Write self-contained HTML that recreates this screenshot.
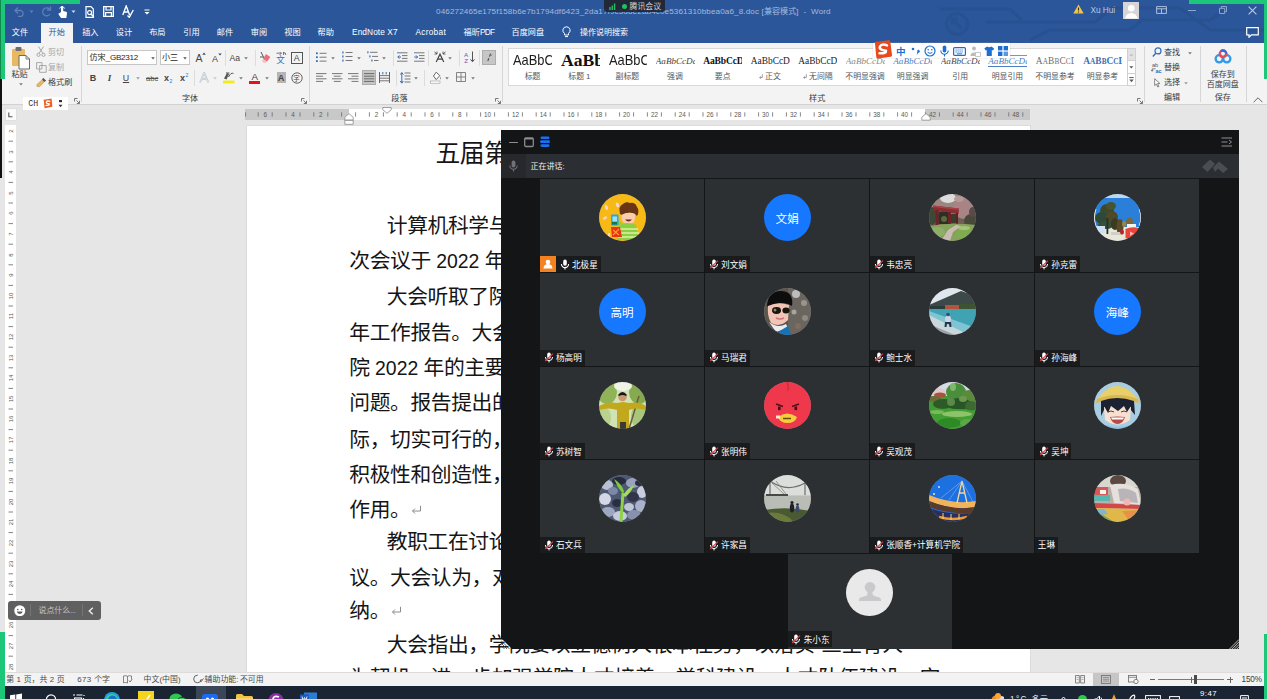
<!DOCTYPE html><html><head><meta charset="utf-8"><title>Word</title><style>html,body{margin:0;padding:0}body{width:1267px;height:699px;overflow:hidden;position:relative;background:#e6e6e6;font-family:"Liberation Sans",sans-serif}svg{display:inline-block}.c{font-family:"Liberation Sans","Noto Sans CJK SC",sans-serif}.d{font-family:"Liberation Sans","Noto Sans CJK SC",sans-serif;font-size:20.8px;letter-spacing:-0.42px}</style></head><body><div style="position:absolute;left:0px;top:0px;width:1267px;height:43px;background:#2b579a;"></div><div style="position:absolute;left:0px;top:43px;width:1267px;height:62px;background:#f3f3f3;border-bottom:1px solid #d2d2d2;box-sizing:content-box;height:61px;"></div><svg style="position:absolute;left:880px;top:0px;" width="387" height="43" viewBox="0 0 387 43"><g fill="none" stroke="#274f8e" stroke-width="3.2" opacity="0.75"><circle cx="77" cy="24" r="10.5"/><path d="M82 29 L72 19 M78 19 H72 V25"/><path d="M60 9 H130 L142 20"/><path d="M106 22 H215 L232 8 H300 L330 30 H387"/><path d="M150 40 L170 30 H250 L262 20 H330 L345 10"/></g></svg><svg style="position:absolute;left:14px;top:6px;" width="12" height="11" viewBox="0 0 12 11"><path d="M1.5 4.5 H7 A3.2 3.2 0 0 1 7 10.5 H4" fill="none" stroke="#5f80b8" stroke-width="1.3"/><path d="M4 1.5 L1 4.5 L4 7.5" fill="none" stroke="#5f80b8" stroke-width="1.3"/></svg><svg style="position:absolute;left:29px;top:10px;" width="5" height="4" viewBox="0 0 5 4"><path d="M0.5 0.5 L2.5 3 L4.5 0.5" fill="#5f80b8"/></svg><svg style="position:absolute;left:40px;top:6px;" width="12" height="11" viewBox="0 0 12 11"><path d="M9.5 3 A4 4 0 1 0 10 8" fill="none" stroke="#5f80b8" stroke-width="1.3"/><path d="M10.5 0.5 V4 H7" fill="none" stroke="#5f80b8" stroke-width="1.3"/></svg><svg style="position:absolute;left:57px;top:5px;" width="11" height="14" viewBox="0 0 11 14"><path d="M4 7 V2.2 a1.1 1.1 0 0 1 2.2 0 V6 l3 .8 q1 .4 .8 1.6 L9.3 13 H4 L1.5 9.2 q-.3-1 .8-1 z" fill="#fff"/><path d="M2.6 3.6 a2.6 2.6 0 0 1 5 0" fill="none" stroke="#fff" stroke-width="0.9"/></svg><svg style="position:absolute;left:71px;top:10px;" width="5" height="4" viewBox="0 0 5 4"><path d="M0.5 0.5 L2.5 3 L4.5 0.5" fill="#cfd9ec"/></svg><svg style="position:absolute;left:85px;top:6px;" width="10" height="12" viewBox="0 0 10 12"><path d="M1 0.7 H6 L8.3 3 V11.3 H1 z" fill="none" stroke="#fff" stroke-width="1.2"/><circle cx="4.6" cy="6.6" r="2" fill="none" stroke="#fff" stroke-width="1.1"/><path d="M6 8 L8.8 11" stroke="#fff" stroke-width="1.3"/></svg><svg style="position:absolute;left:103px;top:6px;" width="11" height="11" viewBox="0 0 11 11"><path d="M0.7 0.7 H10.3 V10.3 H0.7 z" fill="none" stroke="#fff" stroke-width="1.3"/><path d="M3 0.7 V4 H8 V0.7 M2.6 10.3 V6.6 H8.4 V10.3" fill="none" stroke="#fff" stroke-width="1.2"/></svg><svg style="position:absolute;left:122px;top:5px;" width="12" height="13" viewBox="0 0 12 13"><path d="M0.8 10 L4.2 1 L7.6 10 M2 7 H6.4" fill="none" stroke="#fff" stroke-width="1.4"/><path d="M5.5 10.5 L7.3 12.3 L11.3 5" fill="none" stroke="#fff" stroke-width="1.4"/></svg><svg style="position:absolute;left:144px;top:9px;" width="6" height="6" viewBox="0 0 6 6"><path d="M0.5 1 H5.5" stroke="#fff" stroke-width="1"/><path d="M0.5 3 L3 5.5 L5.5 3 z" fill="#fff"/></svg><div style="position:absolute;left:436.00px;top:6.85px;height:9.72px;line-height:9.72px;font-size:8.1px;color:#a6b9dc;white-space:nowrap;font-family:'Liberation Sans',sans-serif"><span style="font-family:'Liberation Sans';font-size:8.1px;letter-spacing:0.13109412202381px;">046272465e175f158b6e7b1794df6423_2da17f9c5d8e2ab4c0e5361310bbea0a6_8.doc&nbsp;[</span><span class="c" style="font-size:8.1px;">兼容模式</span><span style="font-family:'Liberation Sans';font-size:8.1px;letter-spacing:0.13109412202381px;">]&nbsp;&nbsp;-&nbsp;&nbsp;Word</span></div><div style="position:absolute;left:603.5px;top:0px;width:61.5px;height:12.2px;background:rgba(32,36,44,0.9);border-radius:0 0 3px 3px;"></div><svg style="position:absolute;left:609px;top:1.5px;" width="9" height="8" viewBox="0 0 9 8"><path d="M1 8 V5 M3.3 8 V3.5 M5.6 8 V1.5" stroke="#21c064" stroke-width="1.4"/></svg><div style="position:absolute;left:621.5px;top:4px;width:5px;height:5px;background:#21c064;border-radius:50%;"></div><div style="position:absolute;left:629.50px;top:2.36px;height:9.48px;line-height:9.48px;font-size:7.9px;color:#d4d4d4;white-space:nowrap;font-family:'Liberation Sans',sans-serif"><span class="c" style="font-size:7.9px;">腾讯会议</span></div><svg style="position:absolute;left:1073px;top:4px;" width="11" height="10" viewBox="0 0 11 10"><path d="M5.5 0.5 L10.7 9.5 H0.3 z" fill="#f6c343"/><path d="M5.5 3.4 V6.6 M5.5 7.5 V8.6" stroke="#2b2b2b" stroke-width="1.1"/></svg><div style="position:absolute;left:1090.50px;top:6.05px;height:9.96px;line-height:9.96px;font-size:8.3px;color:#b9c8e4;white-space:nowrap;font-family:'Liberation Sans',sans-serif"><span style="font-family:'Liberation Sans';font-size:8.3px;letter-spacing:-0.06861197916666721px;">Xu&nbsp;Hui</span></div><div style="position:absolute;left:1122.5px;top:2px;width:16.5px;height:16.5px;background:#d6d6d6;"></div><svg style="position:absolute;left:1122.5px;top:2px;" width="16.5" height="16.5" viewBox="0 0 16.5 16.5"><circle cx="8.25" cy="6.3" r="3.3" fill="#fff"/><path d="M2 16.5 a6.3 6.3 0 0 1 12.5 0 z" fill="#fff"/></svg><svg style="position:absolute;left:1156px;top:6px;" width="11" height="8" viewBox="0 0 11 8"><path d="M0.6 0.6 H10.4 V7.4 H0.6 z M0.6 2.8 H10.4 M5.5 2.8 V7.4" fill="none" stroke="#aebfdd" stroke-width="1"/></svg><div style="position:absolute;left:1188px;top:10px;width:8px;height:1px;background:#8da6d0;"></div><svg style="position:absolute;left:1218.5px;top:5.5px;" width="8" height="8" viewBox="0 0 8 8"><path d="M0.5 2.3 H5.7 V7.5 H0.5 z M2.3 2.3 V0.5 H7.5 V5.7 H5.7" fill="none" stroke="#8da6d0" stroke-width="1"/></svg><svg style="position:absolute;left:1248px;top:5.5px;" width="9" height="9" viewBox="0 0 9 9"><path d="M0.6 0.6 L8.4 8.4 M8.4 0.6 L0.6 8.4" stroke="#b9c8e4" stroke-width="1.1"/></svg><svg style="position:absolute;left:1246px;top:27px;" width="13" height="11" viewBox="0 0 13 11"><path d="M0.7 0.7 H12.3 V7.8 H5.5 L3 10.2 V7.8 H0.7 z" fill="none" stroke="#fff" stroke-width="1.2"/></svg><div style="position:absolute;left:41px;top:23px;width:32px;height:20.5px;background:#f3f3f3;"></div><div style="position:absolute;left:11.70px;top:27.90px;height:9.84px;line-height:9.84px;font-size:8.2px;color:#ffffff;white-space:nowrap;font-family:'Liberation Sans',sans-serif"><span class="c" style="font-size:8.2px;">文件</span></div><div style="position:absolute;left:82.15px;top:27.90px;height:9.84px;line-height:9.84px;font-size:8.2px;color:#ffffff;white-space:nowrap;font-family:'Liberation Sans',sans-serif"><span class="c" style="font-size:8.2px;">插入</span></div><div style="position:absolute;left:115.80px;top:27.90px;height:9.84px;line-height:9.84px;font-size:8.2px;color:#ffffff;white-space:nowrap;font-family:'Liberation Sans',sans-serif"><span class="c" style="font-size:8.2px;">设计</span></div><div style="position:absolute;left:149.15px;top:27.90px;height:9.84px;line-height:9.84px;font-size:8.2px;color:#ffffff;white-space:nowrap;font-family:'Liberation Sans',sans-serif"><span class="c" style="font-size:8.2px;">布局</span></div><div style="position:absolute;left:183.20px;top:27.90px;height:9.84px;line-height:9.84px;font-size:8.2px;color:#ffffff;white-space:nowrap;font-family:'Liberation Sans',sans-serif"><span class="c" style="font-size:8.2px;">引用</span></div><div style="position:absolute;left:216.80px;top:27.90px;height:9.84px;line-height:9.84px;font-size:8.2px;color:#ffffff;white-space:nowrap;font-family:'Liberation Sans',sans-serif"><span class="c" style="font-size:8.2px;">邮件</span></div><div style="position:absolute;left:250.80px;top:27.90px;height:9.84px;line-height:9.84px;font-size:8.2px;color:#ffffff;white-space:nowrap;font-family:'Liberation Sans',sans-serif"><span class="c" style="font-size:8.2px;">审阅</span></div><div style="position:absolute;left:284.30px;top:27.90px;height:9.84px;line-height:9.84px;font-size:8.2px;color:#ffffff;white-space:nowrap;font-family:'Liberation Sans',sans-serif"><span class="c" style="font-size:8.2px;">视图</span></div><div style="position:absolute;left:317.55px;top:27.90px;height:9.84px;line-height:9.84px;font-size:8.2px;color:#ffffff;white-space:nowrap;font-family:'Liberation Sans',sans-serif"><span class="c" style="font-size:8.2px;">帮助</span></div><div style="position:absolute;left:48.50px;top:27.90px;height:9.84px;line-height:9.84px;font-size:8.2px;color:#2b579a;white-space:nowrap;font-family:'Liberation Sans',sans-serif"><span class="c" style="font-size:8.2px;">开始</span></div><div style="position:absolute;left:352.00px;top:27.85px;height:9.96px;line-height:9.96px;font-size:8.3px;color:#ffffff;white-space:nowrap;font-family:'Liberation Sans',sans-serif"><span style="font-family:'Liberation Sans';font-size:8.3px;letter-spacing:0.09435468749999956px;">EndNote&nbsp;X7</span></div><div style="position:absolute;left:415.40px;top:27.85px;height:9.96px;line-height:9.96px;font-size:8.3px;color:#ffffff;white-space:nowrap;font-family:'Liberation Sans',sans-serif"><span style="font-family:'Liberation Sans';font-size:8.3px;letter-spacing:0.2853459821428567px;">Acrobat</span></div><div style="position:absolute;left:463.50px;top:27.90px;height:9.84px;line-height:9.84px;font-size:8.2px;color:#ffffff;white-space:nowrap;font-family:'Liberation Sans',sans-serif"><span class="c" style="font-size:8.2px;">福昕</span><span style="font-family:'Liberation Sans';font-size:8.2px;letter-spacing:-0.6666666666666655px;">PDF</span></div><div style="position:absolute;left:511.60px;top:27.95px;height:9.72px;line-height:9.72px;font-size:8.1px;color:#ffffff;white-space:nowrap;font-family:'Liberation Sans',sans-serif"><span class="c" style="font-size:8.1px;">百度网盘</span></div><svg style="position:absolute;left:562px;top:26px;" width="9" height="12" viewBox="0 0 9 12"><path d="M4.5 0.8 a3.6 3.6 0 0 1 2 6.6 V9 H2.5 V7.4 A3.6 3.6 0 0 1 4.5 0.8 z M3 10.6 H6" fill="none" stroke="#fff" stroke-width="1"/></svg><div style="position:absolute;left:580.00px;top:28.01px;height:9.60px;line-height:9.60px;font-size:8.0px;color:#ffffff;white-space:nowrap;font-family:'Liberation Sans',sans-serif"><span class="c" style="font-size:8.0px;">操作说明搜索</span></div><div style="position:absolute;left:0px;top:0px;width:80px;height:4px;background:#1dc77a;"></div><div style="position:absolute;left:0px;top:0px;width:4.5px;height:79px;background:#1dc77a;"></div><div style="position:absolute;left:0px;top:0px;width:1px;height:79px;background:#0f8a4c;"></div><div style="position:absolute;left:0px;top:79px;width:1.7px;height:99px;background:#111;"></div><div style="position:absolute;left:0px;top:632px;width:4.5px;height:67px;background:#1dc77a;"></div><div style="position:absolute;left:1189px;top:0px;width:78px;height:3.5px;background:#1dc77a;"></div><div style="position:absolute;left:1263.5px;top:0px;width:3.5px;height:79px;background:#1dc77a;"></div><div style="position:absolute;left:1263.5px;top:634px;width:3.5px;height:65px;background:#1dc77a;"></div><svg style="position:absolute;left:11px;top:46px;" width="20" height="24" viewBox="0 0 20 24"><rect x="1" y="3" width="13" height="17" rx="1" fill="#e9b863"/><rect x="4.5" y="1" width="6" height="4" rx="1" fill="#6d6d6d"/><path d="M8 9.5 H15 L18.5 13 V23 H8 z" fill="#fff" stroke="#6b6b6b" stroke-width="1"/><path d="M15 9.5 V13 H18.5" fill="none" stroke="#6b6b6b" stroke-width="0.9"/></svg><div style="position:absolute;left:11.40px;top:70.45px;height:9.72px;line-height:9.72px;font-size:8.1px;color:#3b3b3b;white-space:nowrap;font-family:'Liberation Sans',sans-serif"><span class="c" style="font-size:8.1px;">粘贴</span></div><svg style="position:absolute;left:18.5px;top:83.3px;" width="4" height="3" viewBox="0 0 4 3"><path d="M0.2 0.3 L2 2.5 L3.8 0.3 z" fill="#777"/></svg><svg style="position:absolute;left:36px;top:46px;" width="10" height="11" viewBox="0 0 10 11"><path d="M2.5 0.5 L7 7.5 M7.5 0.5 L3 7.5" stroke="#a8a8a8" stroke-width="1"/><circle cx="2.5" cy="8.8" r="1.6" fill="none" stroke="#a8a8a8" stroke-width="1"/><circle cx="7.5" cy="8.8" r="1.6" fill="none" stroke="#a8a8a8" stroke-width="1"/></svg><div style="position:absolute;left:48.00px;top:48.05px;height:9.72px;line-height:9.72px;font-size:8.1px;color:#a8a8a8;white-space:nowrap;font-family:'Liberation Sans',sans-serif"><span class="c" style="font-size:8.1px;">剪切</span></div><svg style="position:absolute;left:36px;top:62px;" width="11" height="11" viewBox="0 0 11 11"><path d="M0.6 0.6 H6 V7 H0.6 z M3.6 3.5 H10.2 V10.3 H3.6 z" fill="#f3f3f3" stroke="#a8a8a8" stroke-width="1"/></svg><div style="position:absolute;left:48.00px;top:62.95px;height:9.72px;line-height:9.72px;font-size:8.1px;color:#a8a8a8;white-space:nowrap;font-family:'Liberation Sans',sans-serif"><span class="c" style="font-size:8.1px;">复制</span></div><svg style="position:absolute;left:36px;top:77px;" width="11" height="11" viewBox="0 0 11 11"><path d="M7.2 0.8 L10.2 3.8 L8.2 5 L6 2.8 z" fill="#555"/><path d="M5.8 3 L8 5.2 L3.5 9.8 L0.8 9.3 L1 7.5 z" fill="#e8b661" stroke="#b98a3c" stroke-width="0.5"/></svg><div style="position:absolute;left:48.00px;top:78.45px;height:9.72px;line-height:9.72px;font-size:8.1px;color:#3b3b3b;white-space:nowrap;font-family:'Liberation Sans',sans-serif"><span class="c" style="font-size:8.1px;">格式刷</span></div><svg style="position:absolute;left:74px;top:98px;" width="6" height="6" viewBox="0 0 6 6"><path d="M0.5 3.5 V0.5 H3.5 M2.5 2.5 L5.3 5.3 M5.5 2.8 V5.5 H2.8" fill="none" stroke="#6a6a6a" stroke-width="0.9"/></svg><div style="position:absolute;left:81px;top:46px;width:1px;height:56px;background:#d6d6d6;"></div><div style="position:absolute;left:87px;top:50.3px;width:70px;height:14.6px;background:#fff;border:1px solid #c6c6c6;box-sizing:border-box;"></div><div style="position:absolute;left:89.50px;top:53.25px;height:9.72px;line-height:9.72px;font-size:8.1px;color:#262626;white-space:nowrap;font-family:'Liberation Sans',sans-serif"><span class="c" style="font-size:8.1px;">仿宋</span><span style="font-family:'Liberation Sans';font-size:8.1px;letter-spacing:-0.2750044642857148px;">_GB2312</span></div><svg style="position:absolute;left:150.5px;top:56.8px;" width="4" height="3" viewBox="0 0 4 3"><path d="M0.2 0.3 L2 2.5 L3.8 0.3 z" fill="#555"/></svg><div style="position:absolute;left:159.5px;top:50.3px;width:30px;height:14.6px;background:#fff;border:1px solid #c6c6c6;box-sizing:border-box;"></div><div style="position:absolute;left:162.00px;top:53.25px;height:9.72px;line-height:9.72px;font-size:8.1px;color:#262626;white-space:nowrap;font-family:'Liberation Sans',sans-serif"><span class="c" style="font-size:8.1px;">小三</span></div><svg style="position:absolute;left:183px;top:56.8px;" width="4" height="3" viewBox="0 0 4 3"><path d="M0.2 0.3 L2 2.5 L3.8 0.3 z" fill="#555"/></svg><div style="position:absolute;left:195.50px;top:52.37px;height:12.60px;line-height:12.60px;font-size:10.5px;color:#444;white-space:nowrap;font-family:'Liberation Sans',sans-serif"><span style="font-family:'Liberation Sans';font-size:10.5px;letter-spacing:0.0px;">A</span></div><svg style="position:absolute;left:201.5px;top:51.5px;" width="4" height="3" viewBox="0 0 4 3"><path d="M0.3 2.7 L2 0.5 L3.7 2.7 z" fill="#444"/></svg><div style="position:absolute;left:212.00px;top:53.97px;height:10.80px;line-height:10.80px;font-size:9px;color:#444;white-space:nowrap;font-family:'Liberation Sans',sans-serif"><span style="font-family:'Liberation Sans';font-size:9px;letter-spacing:0.0px;">A</span></div><svg style="position:absolute;left:217.5px;top:52.5px;" width="4" height="3" viewBox="0 0 4 3"><path d="M0.3 0.4 L2 2.6 L3.7 0.4 z" fill="#444"/></svg><div style="position:absolute;left:224.5px;top:50px;width:1px;height:16px;background:#dcdcdc;"></div><div style="position:absolute;left:229.50px;top:52.99px;height:10.32px;line-height:10.32px;font-size:8.6px;color:#444;white-space:nowrap;font-family:'Liberation Sans',sans-serif"><span style="font-family:'Liberation Sans';font-size:8.6px;letter-spacing:0.0px;">Aa</span></div><svg style="position:absolute;left:243.5px;top:56.8px;" width="4" height="3" viewBox="0 0 4 3"><path d="M0.2 0.3 L2 2.5 L3.8 0.3 z" fill="#777"/></svg><div style="position:absolute;left:254.5px;top:50px;width:1px;height:16px;background:#dcdcdc;"></div><svg style="position:absolute;left:259px;top:51px;" width="12" height="12" viewBox="0 0 12 12"><path d="M2 1 L5.5 8 M1 6 H4" stroke="#555" stroke-width="1" fill="none"/><path d="M7 3 L11.3 6 L8 10.8 L4 8 z" fill="#e8707f"/><path d="M4 8 L8 10.8 L7 11.8 H4.5 L3 10 z" fill="#f5c0c6"/></svg><div style="position:absolute;left:276.30px;top:54.69px;height:10.32px;line-height:10.32px;font-size:8.6px;color:#2f6fba;white-space:nowrap;font-family:'Liberation Sans',sans-serif"><span class="c" style="font-size:8.6px;">文</span></div><svg style="position:absolute;left:276px;top:50.5px;" width="11" height="4.5" viewBox="0 0 11 4.5"><path d="M0.5 2.2 H3 M4 1 V4 M4 2.2 H6 M7.5 1 V4 M7.5 1.8 Q9.8 1 9.8 4" stroke="#555" stroke-width="0.8" fill="none"/></svg><div style="position:absolute;left:291px;top:52px;width:11.5px;height:11.5px;border:1px solid #555;box-sizing:border-box;"></div><div style="position:absolute;left:293.87px;top:53.18px;height:10.56px;line-height:10.56px;font-size:8.8px;color:#444;white-space:nowrap;font-family:'Liberation Sans',sans-serif"><span style="font-family:'Liberation Sans';font-size:8.8px;letter-spacing:0.0px;">A</span></div><div style="position:absolute;left:89.75px;top:72.97px;height:10.80px;line-height:10.80px;font-size:9px;color:#444;white-space:nowrap;font-family:'Liberation Sans',sans-serif"><span style="font-family:'Liberation Sans';font-size:9px;letter-spacing:0.0px;font-weight:bold;">B</span></div><div style="position:absolute;left:107.75px;top:72.97px;height:10.80px;line-height:10.80px;font-size:9px;color:#444;white-space:nowrap;font-family:'Liberation Sans',sans-serif"><span style="font-family:'Liberation Serif';font-size:9px;letter-spacing:0.0px;font-style:italic;font-weight:bold;">I</span></div><div style="position:absolute;left:122.82px;top:72.78px;height:10.56px;line-height:10.56px;font-size:8.8px;color:#444;white-space:nowrap;font-family:'Liberation Sans',sans-serif"><span style="font-family:'Liberation Sans';font-size:8.8px;letter-spacing:0.0px;text-decoration:underline;">U</span></div><svg style="position:absolute;left:136px;top:77.3px;" width="4" height="3" viewBox="0 0 4 3"><path d="M0.2 0.3 L2 2.5 L3.8 0.3 z" fill="#999"/></svg><div style="position:absolute;left:146.00px;top:73.72px;height:9.12px;line-height:9.12px;font-size:7.6px;color:#555;white-space:nowrap;font-family:'Liberation Sans',sans-serif"><span style="font-family:'Liberation Sans';font-size:7.6px;letter-spacing:0.0px;text-decoration:line-through;">abc</span></div><div style="position:absolute;left:164.00px;top:72.97px;height:10.80px;line-height:10.80px;font-size:9px;color:#444;white-space:nowrap;font-family:'Liberation Sans',sans-serif"><span style="font-family:'Liberation Sans';font-size:9px;letter-spacing:0.0px;font-weight:bold;">x</span></div><div style="position:absolute;left:169.50px;top:77.62px;height:6.00px;line-height:6.00px;font-size:5px;color:#2f6fba;white-space:nowrap;font-family:'Liberation Sans',sans-serif"><span style="font-family:'Liberation Sans';font-size:5px;letter-spacing:0.0px;">2</span></div><div style="position:absolute;left:180.00px;top:72.97px;height:10.80px;line-height:10.80px;font-size:9px;color:#444;white-space:nowrap;font-family:'Liberation Sans',sans-serif"><span style="font-family:'Liberation Sans';font-size:9px;letter-spacing:0.0px;font-weight:bold;">x</span></div><div style="position:absolute;left:185.50px;top:71.62px;height:6.00px;line-height:6.00px;font-size:5px;color:#2f6fba;white-space:nowrap;font-family:'Liberation Sans',sans-serif"><span style="font-family:'Liberation Sans';font-size:5px;letter-spacing:0.0px;">2</span></div><div style="position:absolute;left:193.5px;top:70px;width:1px;height:16px;background:#dcdcdc;"></div><svg style="position:absolute;left:199px;top:72px;" width="11" height="11" viewBox="0 0 11 11"><path d="M1 10.5 L5.2 0.8 L9.4 10.5 M2.6 7 H7.8" fill="none" stroke="#b9c3d3" stroke-width="1.8"/><path d="M1 10.5 L5.2 0.8 L9.4 10.5 M2.6 7 H7.8" fill="none" stroke="#f3f3f3" stroke-width="0.6"/></svg><svg style="position:absolute;left:212.5px;top:77.3px;" width="4" height="3" viewBox="0 0 4 3"><path d="M0.2 0.3 L2 2.5 L3.8 0.3 z" fill="#c8c8c8"/></svg><svg style="position:absolute;left:222px;top:71px;" width="14" height="13" viewBox="0 0 14 13"><path d="M2 7.5 L5 2 L7 3 L4.5 8.5 z" fill="#555"/><path d="M6.5 6 Q9 1 11.5 2.5 M4 2 H7.5" stroke="#555" stroke-width="1" fill="none"/><rect x="1" y="9.6" width="11.5" height="2.8" fill="#f5ea14"/></svg><svg style="position:absolute;left:239px;top:77.3px;" width="4" height="3" viewBox="0 0 4 3"><path d="M0.2 0.3 L2 2.5 L3.8 0.3 z" fill="#777"/></svg><div style="position:absolute;left:251.53px;top:71.04px;height:11.76px;line-height:11.76px;font-size:9.8px;color:#444;white-space:nowrap;font-family:'Liberation Sans',sans-serif"><span style="font-family:'Liberation Sans';font-size:9.8px;letter-spacing:0.0px;">A</span></div><div style="position:absolute;left:249.3px;top:81px;width:11px;height:2.6px;background:#e3141c;"></div><svg style="position:absolute;left:264.5px;top:77.3px;" width="4" height="3" viewBox="0 0 4 3"><path d="M0.2 0.3 L2 2.5 L3.8 0.3 z" fill="#777"/></svg><div style="position:absolute;left:276.5px;top:72.3px;width:9px;height:10.5px;background:#b5b5b5;"></div><div style="position:absolute;left:277.68px;top:72.86px;height:11.04px;line-height:11.04px;font-size:9.2px;color:#444;white-space:nowrap;font-family:'Liberation Sans',sans-serif"><span style="font-family:'Liberation Sans';font-size:9.2px;letter-spacing:0.0px;font-weight:bold;">A</span></div><svg style="position:absolute;left:290.5px;top:72px;" width="12" height="12" viewBox="0 0 12 12"><circle cx="6" cy="6" r="5.2" fill="none" stroke="#555" stroke-width="0.9"/></svg><div style="position:absolute;left:293.30px;top:74.57px;height:7.68px;line-height:7.68px;font-size:6.4px;color:#444;white-space:nowrap;font-family:'Liberation Sans',sans-serif"><span class="c" style="font-size:6.4px;">字</span></div><div style="position:absolute;left:181.90px;top:93.65px;height:9.72px;line-height:9.72px;font-size:8.1px;color:#3b3b3b;white-space:nowrap;font-family:'Liberation Sans',sans-serif"><span class="c" style="font-size:8.1px;">字体</span></div><svg style="position:absolute;left:300.5px;top:98px;" width="6" height="6" viewBox="0 0 6 6"><path d="M0.5 3.5 V0.5 H3.5 M2.5 2.5 L5.3 5.3 M5.5 2.8 V5.5 H2.8" fill="none" stroke="#6a6a6a" stroke-width="0.9"/></svg><div style="position:absolute;left:308.5px;top:46px;width:1px;height:56px;background:#d6d6d6;"></div><svg style="position:absolute;left:316px;top:51.5px;" width="11" height="11" viewBox="0 0 11 11"><rect x="0" y="0.4" width="1.8" height="1.8" fill="#2f6fba"/><path d="M3.6 1.3 H10.5" stroke="#777" stroke-width="1"/><rect x="0" y="4.3" width="1.8" height="1.8" fill="#2f6fba"/><path d="M3.6 5.2 H10.5" stroke="#777" stroke-width="1"/><rect x="0" y="8.2" width="1.8" height="1.8" fill="#2f6fba"/><path d="M3.6 9.1 H10.5" stroke="#777" stroke-width="1"/></svg><svg style="position:absolute;left:331px;top:56.8px;" width="4" height="3" viewBox="0 0 4 3"><path d="M0.2 0.3 L2 2.5 L3.8 0.3 z" fill="#777"/></svg><svg style="position:absolute;left:342px;top:51px;" width="11" height="12" viewBox="0 0 11 12"><rect x="0.3" y="0.4" width="1.2" height="2.2" fill="#2f6fba"/><path d="M3.6 1.5 H10.5" stroke="#777" stroke-width="1"/><rect x="0.3" y="4.4" width="1.2" height="2.2" fill="#2f6fba"/><path d="M3.6 5.5 H10.5" stroke="#777" stroke-width="1"/><rect x="0.3" y="8.4" width="1.2" height="2.2" fill="#2f6fba"/><path d="M3.6 9.5 H10.5" stroke="#777" stroke-width="1"/></svg><svg style="position:absolute;left:356.5px;top:56.8px;" width="4" height="3" viewBox="0 0 4 3"><path d="M0.2 0.3 L2 2.5 L3.8 0.3 z" fill="#777"/></svg><svg style="position:absolute;left:367px;top:51px;" width="12" height="12" viewBox="0 0 12 12"><rect x="0.3" y="0.3" width="1.2" height="2" fill="#2f6fba"/><path d="M3 1.3 H10.5" stroke="#777"/><rect x="2.3" y="4.4" width="1.2" height="2" fill="#2f6fba"/><path d="M5 5.4 H11" stroke="#777"/><rect x="4.3" y="8.5" width="1.2" height="2" fill="#2f6fba"/><path d="M7 9.5 H11.5" stroke="#777"/></svg><svg style="position:absolute;left:381.5px;top:56.8px;" width="4" height="3" viewBox="0 0 4 3"><path d="M0.2 0.3 L2 2.5 L3.8 0.3 z" fill="#777"/></svg><div style="position:absolute;left:392.5px;top:50px;width:1px;height:16px;background:#dcdcdc;"></div><svg style="position:absolute;left:397px;top:51.5px;" width="11" height="11" viewBox="0 0 11 11"><path d="M0 0.8 H10.5 M5 3.6 H10.5 M5 6.4 H10.5 M0 9.2 H10.5" stroke="#777" stroke-width="1"/><path d="M4 5 H0.8 M2.4 3.4 L0.8 5 L2.4 6.6" stroke="#2f6fba" stroke-width="1" fill="none"/></svg><svg style="position:absolute;left:413.5px;top:51.5px;" width="11" height="11" viewBox="0 0 11 11"><path d="M0 0.8 H10.5 M5 3.6 H10.5 M5 6.4 H10.5 M0 9.2 H10.5" stroke="#777" stroke-width="1"/><path d="M0.3 5 H3.6 M2 3.4 L3.6 5 L2 6.6" stroke="#2f6fba" stroke-width="1" fill="none"/></svg><div style="position:absolute;left:428px;top:50px;width:1px;height:16px;background:#dcdcdc;"></div><svg style="position:absolute;left:433.5px;top:51px;" width="12" height="12" viewBox="0 0 12 12"><path d="M2.2 11 L6 3.2 L9.8 11 M3.6 8.2 H8.4" fill="none" stroke="#444" stroke-width="1.2"/><path d="M0.5 0.8 L3 3 M3 0.5 V3 H0.5 M11.5 0.8 L9 3 M9 0.5 V3 H11.5" stroke="#444" stroke-width="0.8" fill="none"/></svg><svg style="position:absolute;left:447.5px;top:56.8px;" width="4" height="3" viewBox="0 0 4 3"><path d="M0.2 0.3 L2 2.5 L3.8 0.3 z" fill="#777"/></svg><div style="position:absolute;left:458.7px;top:50px;width:1px;height:16px;background:#dcdcdc;"></div><div style="position:absolute;left:464.00px;top:50.97px;height:7.44px;line-height:7.44px;font-size:6.2px;color:#2f6fba;white-space:nowrap;font-family:'Liberation Sans',sans-serif"><span style="font-family:'Liberation Sans';font-size:6.2px;letter-spacing:0.0px;">A</span></div><div style="position:absolute;left:464.30px;top:57.47px;height:7.44px;line-height:7.44px;font-size:6.2px;color:#7a4fa0;white-space:nowrap;font-family:'Liberation Sans',sans-serif"><span style="font-family:'Liberation Sans';font-size:6.2px;letter-spacing:0.0px;">Z</span></div><svg style="position:absolute;left:469.5px;top:51px;" width="5" height="12" viewBox="0 0 5 12"><path d="M2.5 0.5 V10.5 M0.5 8.3 L2.5 10.8 L4.5 8.3" fill="none" stroke="#555" stroke-width="1"/></svg><div style="position:absolute;left:478.6px;top:50px;width:1px;height:16px;background:#dcdcdc;"></div><div style="position:absolute;left:482px;top:50.3px;width:14px;height:14.6px;background:#c6c6c6;border:1px solid #adadad;box-sizing:border-box;"></div><svg style="position:absolute;left:485.5px;top:53px;" width="7" height="9" viewBox="0 0 7 9"><path d="M4.6 0.6 L3.4 3.6 M2.8 5.2 L1.8 8" stroke="#555" stroke-width="1.2"/><path d="M5.8 1.6 L4.6 3" stroke="#555" stroke-width="0.8"/></svg><svg style="position:absolute;left:316px;top:72.5px;" width="11" height="11" viewBox="0 0 11 11"><path d="M0 0.6 H10.5 M0 3.2 H7 M0 5.8 H10.5 M0 8.4 H7" stroke="#777" stroke-width="1"/></svg><svg style="position:absolute;left:332px;top:72.5px;" width="11" height="11" viewBox="0 0 11 11"><path d="M0 0.6 H10.5 M1.8 3.2 H8.7 M0 5.8 H10.5 M1.8 8.4 H8.7" stroke="#777" stroke-width="1"/></svg><svg style="position:absolute;left:348px;top:72.5px;" width="11" height="11" viewBox="0 0 11 11"><path d="M0 0.6 H10.5 M3.5 3.2 H10.5 M0 5.8 H10.5 M3.5 8.4 H10.5" stroke="#777" stroke-width="1"/></svg><div style="position:absolute;left:361.5px;top:70.3px;width:14.5px;height:15px;background:#c6c6c6;border:1px solid #adadad;box-sizing:border-box;"></div><svg style="position:absolute;left:363.7px;top:72.5px;" width="11" height="11" viewBox="0 0 11 11"><path d="M0 0.6 H10.3 M0 3.2 H10.3 M0 5.8 H10.3 M0 8.4 H10.3" stroke="#6a6a6a" stroke-width="1"/></svg><svg style="position:absolute;left:379px;top:72px;" width="12" height="12" viewBox="0 0 12 12"><path d="M0 3.6 H11 M0 6.2 H11 M0 8.8 H11" stroke="#777" stroke-width="1"/><path d="M0.5 0 V11 M10.5 0 V11 M3.8 0 V2.4 M7.2 0 V2.4" stroke="#2f6fba" stroke-width="1"/></svg><div style="position:absolute;left:395.5px;top:70px;width:1px;height:16px;background:#dcdcdc;"></div><svg style="position:absolute;left:400px;top:71.5px;" width="11" height="12" viewBox="0 0 11 12"><path d="M4.6 1 H10.5 M4.6 4 H10.5 M4.6 7 H10.5 M4.6 10 H10.5" stroke="#777" stroke-width="1"/><path d="M1.8 0.8 V11 M0.2 2.6 L1.8 0.6 L3.4 2.6 M0.2 9 L1.8 11.2 L3.4 9" stroke="#2f6fba" stroke-width="1" fill="none"/></svg><svg style="position:absolute;left:413.5px;top:77.3px;" width="4" height="3" viewBox="0 0 4 3"><path d="M0.2 0.3 L2 2.5 L3.8 0.3 z" fill="#777"/></svg><div style="position:absolute;left:424.4px;top:70px;width:1px;height:16px;background:#dcdcdc;"></div><svg style="position:absolute;left:430px;top:71px;" width="12" height="13" viewBox="0 0 12 13"><path d="M3.5 5 L6.2 1.2 L9.8 4.6 L6.2 8.6 z" fill="#fff" stroke="#555" stroke-width="0.9"/><path d="M10.2 5.5 q1.4 2 0 3.2 q-1.4-1.200-3.200z" fill="#555"/><rect x="0.5" y="10" width="9.5" height="2.2" fill="#fff" stroke="#999" stroke-width="0.6"/></svg><svg style="position:absolute;left:444.5px;top:77.3px;" width="4" height="3" viewBox="0 0 4 3"><path d="M0.2 0.3 L2 2.5 L3.8 0.3 z" fill="#777"/></svg><svg style="position:absolute;left:456px;top:72.3px;" width="10" height="10" viewBox="0 0 10 10"><path d="M0.5 0.5 H9.5 V9.5 H0.5 z M5 0.5 V9.5 M0.5 5 H9.5" fill="none" stroke="#777" stroke-width="0.9"/></svg><svg style="position:absolute;left:470.5px;top:77.3px;" width="4" height="3" viewBox="0 0 4 3"><path d="M0.2 0.3 L2 2.5 L3.8 0.3 z" fill="#777"/></svg><div style="position:absolute;left:391.30px;top:93.65px;height:9.72px;line-height:9.72px;font-size:8.1px;color:#3b3b3b;white-space:nowrap;font-family:'Liberation Sans',sans-serif"><span class="c" style="font-size:8.1px;">段落</span></div><svg style="position:absolute;left:494.5px;top:98px;" width="6" height="6" viewBox="0 0 6 6"><path d="M0.5 3.5 V0.5 H3.5 M2.5 2.5 L5.3 5.3 M5.5 2.8 V5.5 H2.8" fill="none" stroke="#6a6a6a" stroke-width="0.9"/></svg><div style="position:absolute;left:501.8px;top:46px;width:1px;height:56px;background:#d6d6d6;"></div><div style="position:absolute;left:507.5px;top:48px;width:628.5px;height:38px;background:#fff;border:1px solid #d9d9d9;box-sizing:border-box;"></div><div style="position:absolute;left:513.3px;top:50.2px;width:38.90000000000009px;height:20px;line-height:20px;overflow:hidden;white-space:nowrap;font-family:'Liberation Sans';font-size:14.3px;color:#1d1d1d;"><span style="display:inline-block;transform:scaleX(0.9);transform-origin:0 50%">AaBbCc</span></div><div style="position:absolute;left:561px;top:49.6px;width:38.799999999999955px;height:20px;line-height:20px;overflow:hidden;white-space:nowrap;font-family:'Liberation Serif';font-size:17.6px;color:#111;font-weight:bold;">AaBbC</div><div style="position:absolute;left:608.6px;top:50.2px;width:38.799999999999955px;height:20px;line-height:20px;overflow:hidden;white-space:nowrap;font-family:'Liberation Sans';font-size:14.3px;color:#1d1d1d;"><span style="display:inline-block;transform:scaleX(0.9);transform-origin:0 50%">AaBbCc</span></div><div style="position:absolute;left:655.8px;top:51px;width:38.90000000000009px;height:20px;line-height:20px;overflow:hidden;white-space:nowrap;font-family:'Liberation Serif';font-size:9.1px;color:#444;font-style:italic;">AaBbCcDd</div><div style="position:absolute;left:703.3px;top:51px;width:38.90000000000009px;height:20px;line-height:20px;overflow:hidden;white-space:nowrap;font-family:'Liberation Serif';font-size:9.5px;color:#111;font-weight:bold;letter-spacing:-0.15px;">AaBbCcDd</div><div style="position:absolute;left:750.8px;top:51px;width:38.90000000000009px;height:20px;line-height:20px;overflow:hidden;white-space:nowrap;font-family:'Liberation Serif';font-size:9.4px;color:#222;">AaBbCcDd</div><div style="position:absolute;left:798.3px;top:51px;width:38.90000000000009px;height:20px;line-height:20px;overflow:hidden;white-space:nowrap;font-family:'Liberation Serif';font-size:9.4px;color:#222;">AaBbCcDd</div><div style="position:absolute;left:845.8px;top:51px;width:38.90000000000009px;height:20px;line-height:20px;overflow:hidden;white-space:nowrap;font-family:'Liberation Serif';font-size:9.1px;color:#8a8a8a;font-style:italic;">AaBbCcDd</div><div style="position:absolute;left:893.3px;top:51px;width:38.90000000000009px;height:20px;line-height:20px;overflow:hidden;white-space:nowrap;font-family:'Liberation Serif';font-size:9.1px;color:#4a7fc4;font-style:italic;">AaBbCcDd</div><div style="position:absolute;left:940.8px;top:51px;width:38.90000000000009px;height:20px;line-height:20px;overflow:hidden;white-space:nowrap;font-family:'Liberation Serif';font-size:9.1px;color:#4a4a4a;font-style:italic;">AaBbCcDd</div><div style="position:absolute;left:988.3px;top:51px;width:38.90000000000009px;height:20px;line-height:20px;overflow:hidden;white-space:nowrap;font-family:'Liberation Serif';font-size:9.1px;color:#4a7fc4;font-style:italic;">AaBbCcDd</div><div style="position:absolute;left:988px;top:55.2px;width:39px;height:0.8px;background:#6d97cf;"></div><div style="position:absolute;left:988px;top:66.4px;width:39px;height:0.8px;background:#4a7fc4;"></div><div style="position:absolute;left:1035.8px;top:51px;width:38.700000000000045px;height:20px;line-height:20px;overflow:hidden;white-space:nowrap;font-family:'Liberation Serif';font-size:9.4px;color:#6d6d6d;letter-spacing:0.1px;">A<span style="font-size:7.3px">A</span>B<span style="font-size:7.3px">B</span>C<span style="font-size:7.3px">C</span>D</div><div style="position:absolute;left:1083.3px;top:51px;width:39.200000000000045px;height:20px;line-height:20px;overflow:hidden;white-space:nowrap;font-family:'Liberation Serif';font-size:9.4px;color:#3d6fb5;font-weight:bold;letter-spacing:0px;">A<span style="font-size:7.3px">A</span>B<span style="font-size:7.3px">B</span>C<span style="font-size:7.3px">C</span>D</div><div style="position:absolute;left:524.70px;top:71.96px;height:9.48px;line-height:9.48px;font-size:7.9px;color:#555;white-space:nowrap;font-family:'Liberation Sans',sans-serif"><span class="c" style="font-size:7.9px;">标题</span></div><div style="position:absolute;left:615.55px;top:71.96px;height:9.48px;line-height:9.48px;font-size:7.9px;color:#555;white-space:nowrap;font-family:'Liberation Sans',sans-serif"><span class="c" style="font-size:7.9px;">副标题</span></div><div style="position:absolute;left:667.10px;top:71.96px;height:9.48px;line-height:9.48px;font-size:7.9px;color:#555;white-space:nowrap;font-family:'Liberation Sans',sans-serif"><span class="c" style="font-size:7.9px;">强调</span></div><div style="position:absolute;left:714.80px;top:71.96px;height:9.48px;line-height:9.48px;font-size:7.9px;color:#555;white-space:nowrap;font-family:'Liberation Sans',sans-serif"><span class="c" style="font-size:7.9px;">要点</span></div><div style="position:absolute;left:845.25px;top:71.96px;height:9.48px;line-height:9.48px;font-size:7.9px;color:#555;white-space:nowrap;font-family:'Liberation Sans',sans-serif"><span class="c" style="font-size:7.9px;">不明显强调</span></div><div style="position:absolute;left:896.80px;top:71.96px;height:9.48px;line-height:9.48px;font-size:7.9px;color:#555;white-space:nowrap;font-family:'Liberation Sans',sans-serif"><span class="c" style="font-size:7.9px;">明显强调</span></div><div style="position:absolute;left:952.30px;top:71.96px;height:9.48px;line-height:9.48px;font-size:7.9px;color:#555;white-space:nowrap;font-family:'Liberation Sans',sans-serif"><span class="c" style="font-size:7.9px;">引用</span></div><div style="position:absolute;left:991.70px;top:71.96px;height:9.48px;line-height:9.48px;font-size:7.9px;color:#555;white-space:nowrap;font-family:'Liberation Sans',sans-serif"><span class="c" style="font-size:7.9px;">明显引用</span></div><div style="position:absolute;left:1035.25px;top:71.96px;height:9.48px;line-height:9.48px;font-size:7.9px;color:#555;white-space:nowrap;font-family:'Liberation Sans',sans-serif"><span class="c" style="font-size:7.9px;">不明显参考</span></div><div style="position:absolute;left:1086.70px;top:71.96px;height:9.48px;line-height:9.48px;font-size:7.9px;color:#555;white-space:nowrap;font-family:'Liberation Sans',sans-serif"><span class="c" style="font-size:7.9px;">明显参考</span></div><div style="position:absolute;left:568.30px;top:71.96px;height:9.48px;line-height:9.48px;font-size:7.9px;color:#555;white-space:nowrap;font-family:'Liberation Sans',sans-serif"><span class="c" style="font-size:7.9px;">标题</span><span style="font-family:'Liberation Sans';font-size:7.9px;letter-spacing:-0.19392968750000072px;">&nbsp;1</span></div><div style="position:absolute;left:765.00px;top:71.96px;height:9.48px;line-height:9.48px;font-size:7.9px;color:#555;white-space:nowrap;font-family:'Liberation Sans',sans-serif"><span class="c" style="font-size:7.9px;">正文</span></div><div style="position:absolute;left:809.00px;top:71.96px;height:9.48px;line-height:9.48px;font-size:7.9px;color:#555;white-space:nowrap;font-family:'Liberation Sans',sans-serif"><span class="c" style="font-size:7.9px;">无间隔</span></div><svg style="position:absolute;left:759px;top:74px;" width="4" height="5" viewBox="0 0 4 5"><path d="M3.3 0.3 V3.5 H0.8 M1.8 2.4 L0.6 3.5 L1.8 4.6" fill="none" stroke="#777" stroke-width="0.7"/></svg><svg style="position:absolute;left:803px;top:74px;" width="4" height="5" viewBox="0 0 4 5"><path d="M3.3 0.3 V3.5 H0.8 M1.8 2.4 L0.6 3.5 L1.8 4.6" fill="none" stroke="#777" stroke-width="0.7"/></svg><div style="position:absolute;left:1127.3px;top:48px;width:8.7px;height:38px;background:#fff;border:1px solid #d0d0d0;box-sizing:border-box;"></div><div style="position:absolute;left:1127.3px;top:48px;width:8.7px;height:13px;background:#e2e2e2;border:1px solid #d0d0d0;box-sizing:border-box;"></div><div style="position:absolute;left:1127.3px;top:73px;width:8.7px;height:1px;background:#d0d0d0;"></div><svg style="position:absolute;left:1129.4px;top:53px;" width="4.6" height="3" viewBox="0 0 4.6 3"><path d="M0.3 2.7 L2.3 0.4 L4.3 2.7 z" fill="#bdbdbd"/></svg><svg style="position:absolute;left:1129.4px;top:65.5px;" width="4.6" height="3" viewBox="0 0 4.6 3"><path d="M0.3 0.3 L2.3 2.6 L4.3 0.3 z" fill="#555"/></svg><svg style="position:absolute;left:1129.2px;top:76.5px;" width="5" height="6" viewBox="0 0 5 6"><path d="M0.3 0.6 H4.7" stroke="#555" stroke-width="1"/><path d="M0.3 2.6 L2.5 5.2 L4.7 2.6 z" fill="#555"/></svg><div style="position:absolute;left:809.10px;top:93.65px;height:9.72px;line-height:9.72px;font-size:8.1px;color:#3b3b3b;white-space:nowrap;font-family:'Liberation Sans',sans-serif"><span class="c" style="font-size:8.1px;">样式</span></div><svg style="position:absolute;left:1137px;top:98px;" width="6" height="6" viewBox="0 0 6 6"><path d="M0.5 3.5 V0.5 H3.5 M2.5 2.5 L5.3 5.3 M5.5 2.8 V5.5 H2.8" fill="none" stroke="#6a6a6a" stroke-width="0.9"/></svg><div style="position:absolute;left:1143.7px;top:46px;width:1px;height:56px;background:#d6d6d6;"></div><svg style="position:absolute;left:1152px;top:47px;" width="10" height="10" viewBox="0 0 10 10"><circle cx="6" cy="3.9" r="3" fill="none" stroke="#2f6fba" stroke-width="1.2"/><path d="M3.8 6.2 L0.8 9.4" stroke="#2f6fba" stroke-width="1.4"/></svg><div style="position:absolute;left:1164.00px;top:48.05px;height:9.72px;line-height:9.72px;font-size:8.1px;color:#3b3b3b;white-space:nowrap;font-family:'Liberation Sans',sans-serif"><span class="c" style="font-size:8.1px;">查找</span></div><svg style="position:absolute;left:1187.5px;top:51.8px;" width="4" height="3" viewBox="0 0 4 3"><path d="M0.2 0.3 L2 2.5 L3.8 0.3 z" fill="#777"/></svg><div style="position:absolute;left:1152.00px;top:62.30px;height:6.72px;line-height:6.72px;font-size:5.6px;color:#555;white-space:nowrap;font-family:'Liberation Sans',sans-serif"><span style="font-family:'Liberation Sans';font-size:5.6px;letter-spacing:0.0px;">ab</span></div><div style="position:absolute;left:1155.50px;top:67.60px;height:6.72px;line-height:6.72px;font-size:5.6px;color:#2f6fba;white-space:nowrap;font-family:'Liberation Sans',sans-serif"><span style="font-family:'Liberation Sans';font-size:5.6px;letter-spacing:0.0px;font-weight:bold;">ac</span></div><svg style="position:absolute;left:1151px;top:67.5px;" width="5" height="4" viewBox="0 0 5 4"><path d="M4.5 0.8 H1.2 V3 M0.2 2 L1.2 3.3 L2.2 2" fill="none" stroke="#555" stroke-width="0.7"/></svg><div style="position:absolute;left:1164.00px;top:63.45px;height:9.72px;line-height:9.72px;font-size:8.1px;color:#3b3b3b;white-space:nowrap;font-family:'Liberation Sans',sans-serif"><span class="c" style="font-size:8.1px;">替换</span></div><svg style="position:absolute;left:1154px;top:77.5px;" width="7" height="10" viewBox="0 0 7 10"><path d="M0.7 0.7 V7.6 L2.4 6 L3.8 9 L4.9 8.5 L3.6 5.6 L5.8 5.4 z" fill="#fff" stroke="#666" stroke-width="0.8"/></svg><div style="position:absolute;left:1164.00px;top:78.25px;height:9.72px;line-height:9.72px;font-size:8.1px;color:#3b3b3b;white-space:nowrap;font-family:'Liberation Sans',sans-serif"><span class="c" style="font-size:8.1px;">选择</span></div><svg style="position:absolute;left:1183.5px;top:82.0px;" width="4" height="3" viewBox="0 0 4 3"><path d="M0.2 0.3 L2 2.5 L3.8 0.3 z" fill="#999"/></svg><div style="position:absolute;left:1163.90px;top:93.45px;height:9.72px;line-height:9.72px;font-size:8.1px;color:#3b3b3b;white-space:nowrap;font-family:'Liberation Sans',sans-serif"><span class="c" style="font-size:8.1px;">编辑</span></div><div style="position:absolute;left:1199.7px;top:46px;width:1px;height:56px;background:#d6d6d6;"></div><svg style="position:absolute;left:1214px;top:49px;" width="18" height="15" viewBox="0 0 18 15"><circle cx="5.2" cy="9.8" r="3.6" fill="none" stroke="#2d9be8" stroke-width="2.3"/><circle cx="12.8" cy="9.8" r="3.6" fill="none" stroke="#2d9be8" stroke-width="2.3"/><circle cx="9" cy="4.8" r="3.3" fill="none" stroke="#e94a53" stroke-width="2.3"/><circle cx="9" cy="4.8" r="3.3" fill="none" stroke="#2d6fe0" stroke-width="2.3" stroke-dasharray="8 30" stroke-dashoffset="-13"/></svg><div style="position:absolute;left:1210.80px;top:69.71px;height:9.60px;line-height:9.60px;font-size:8.0px;color:#3b3b3b;white-space:nowrap;font-family:'Liberation Sans',sans-serif"><span class="c" style="font-size:8.0px;">保存到</span></div><div style="position:absolute;left:1206.80px;top:79.71px;height:9.60px;line-height:9.60px;font-size:8.0px;color:#3b3b3b;white-space:nowrap;font-family:'Liberation Sans',sans-serif"><span class="c" style="font-size:8.0px;">百度网盘</span></div><div style="position:absolute;left:1214.70px;top:93.45px;height:9.72px;line-height:9.72px;font-size:8.1px;color:#3b3b3b;white-space:nowrap;font-family:'Liberation Sans',sans-serif"><span class="c" style="font-size:8.1px;">保存</span></div><div style="position:absolute;left:1245.5px;top:46px;width:1px;height:56px;background:#d6d6d6;"></div><svg style="position:absolute;left:1252.5px;top:97px;" width="10" height="6" viewBox="0 0 10 6"><path d="M0.6 5.2 L5 0.8 L9.4 5.2" fill="none" stroke="#666" stroke-width="1"/></svg><div style="position:absolute;left:873px;top:43.3px;width:137px;height:15px;background:#fff;box-shadow:0 0 1px #bbb;"></div><svg style="position:absolute;left:872.3px;top:40px;" width="21" height="20" viewBox="0 0 21 20"><path d="M3 3.5 Q3 2 4.5 1.8 L16.5 0.3 Q18 0.2 18.3 1.6 L20 15 Q20.2 16.5 18.7 16.8 L6 18.6 Q4.5 18.8 4.3 17.3 z" fill="#e8491d"/><path d="M15 5.4 Q9.5 3.3 8 6.6 T 14 10.8 Q 14.5 13.8 7.5 13.3" fill="none" stroke="#fff" stroke-width="2.5" stroke-linecap="round"/></svg><div style="position:absolute;left:896.00px;top:45.65px;height:11.52px;line-height:11.52px;font-size:9.6px;color:#1c6fd0;white-space:nowrap;font-family:'Liberation Sans',sans-serif"><span class="c" style="font-size:9.6px;font-weight:bold;">中</span></div><svg style="position:absolute;left:911px;top:47px;" width="9" height="8" viewBox="0 0 9 8"><circle cx="2" cy="2" r="1.3" fill="#1c6fd0"/><path d="M6.5 3.5 a1.2 1.2 0 1 1 -.2 1.5 q1 .8 -.3 2.4" fill="#1c6fd0" stroke="#1c6fd0" stroke-width="0.6"/></svg><svg style="position:absolute;left:924px;top:45px;" width="12" height="12" viewBox="0 0 12 12"><circle cx="6" cy="6" r="5" fill="none" stroke="#1c6fd0" stroke-width="1.2"/><circle cx="4.2" cy="4.8" r="0.8" fill="#1c6fd0"/><circle cx="7.8" cy="4.8" r="0.8" fill="#1c6fd0"/><path d="M3.6 7.3 Q6 9.6 8.4 7.3" fill="none" stroke="#1c6fd0" stroke-width="1"/></svg><svg style="position:absolute;left:940px;top:45px;" width="9" height="12" viewBox="0 0 9 12"><rect x="2.7" y="0.5" width="3.6" height="7" rx="1.8" fill="#1c6fd0"/><path d="M0.8 5.5 a3.7 3.7 0 0 0 7.4 0 M4.5 9.2 V11.5" fill="none" stroke="#1c6fd0" stroke-width="1.1"/></svg><svg style="position:absolute;left:953px;top:46.5px;" width="13" height="9" viewBox="0 0 13 9"><rect x="0.6" y="0.6" width="11.8" height="7.8" rx="1" fill="none" stroke="#1c6fd0" stroke-width="1.2"/><path d="M2.5 3 H10.5 M2.5 5 H10.5" stroke="#1c6fd0" stroke-width="1" stroke-dasharray="1.2 0.8"/><path d="M4 6.8 H9" stroke="#1c6fd0" stroke-width="0.9"/></svg><svg style="position:absolute;left:970px;top:45.5px;" width="11" height="11" viewBox="0 0 11 11"><circle cx="4" cy="2.5" r="2" fill="#bcbcbc"/><path d="M0.5 10 a3.5 3.5 0 0 1 7 0 z" fill="#bcbcbc"/><rect x="5.5" y="6.5" width="5" height="4" fill="#fff" stroke="#bcbcbc" stroke-width="0.8"/></svg><svg style="position:absolute;left:983.5px;top:45.5px;" width="10.5" height="10.5" viewBox="0 0 10.5 10.5"><path d="M3 0.5 Q5.2 2 7.5 0.5 L10.2 2.6 L8.8 4.6 L7.8 4 V10 H2.7 V4 L1.7 4.6 L0.3 2.6 z" fill="#1c6fd0"/></svg><svg style="position:absolute;left:997.5px;top:45.5px;" width="10" height="10" viewBox="0 0 10 10"><rect x="0" y="0" width="4.4" height="4.4" fill="#1c6fd0"/><rect x="5.6" y="0" width="4.4" height="4.4" fill="#1c6fd0"/><rect x="0" y="5.6" width="4.4" height="4.4" fill="#1c6fd0"/><rect x="5.6" y="5.6" width="4.4" height="4.4" fill="#5b98e0"/></svg><div style="position:absolute;left:23px;top:96.5px;width:45px;height:13px;background:#fff;"></div><div style="position:absolute;left:28.30px;top:98.80px;height:9.84px;line-height:9.84px;font-size:8.2px;color:#333;white-space:nowrap;font-family:'Liberation Sans',sans-serif"><span style="font-family:'Liberation Mono';font-size:8.2px;letter-spacing:0.0px;">CH</span></div><svg style="position:absolute;left:41.5px;top:97.5px;" width="11" height="11" viewBox="0 0 11 11"><path d="M1.6 1.8 L9.6 0.6 L10.4 8.8 L2.6 10.2 z" fill="#e8632a"/><path d="M7.8 3.3 Q5 2.4 4.4 4 T 7.3 6 Q 7.5 7.5 4 7.3" fill="none" stroke="#fff" stroke-width="1.3" stroke-linecap="round"/></svg><svg style="position:absolute;left:58px;top:98.5px;" width="5" height="9" viewBox="0 0 5 9"><path d="M1 1 H4 V3.2 H1 z" fill="#333"/><path d="M0.5 5.8 L2.5 8.2 L4.5 5.8 z" fill="#333"/></svg><div style="position:absolute;left:245px;top:109px;width:785px;height:10.5px;background:#fff;"></div><div style="position:absolute;left:245px;top:109px;width:103.5px;height:10.5px;background:#c8c8c8;"></div><div style="position:absolute;left:925px;top:109px;width:105px;height:10.5px;background:#c8c8c8;"></div><div style="position:absolute;left:263.45px;top:111.02px;height:7.56px;line-height:7.56px;font-size:6.3px;color:#5a5a5a;white-space:nowrap;font-family:'Liberation Sans',sans-serif"><span style="font-family:'Liberation Sans';font-size:6.3px;letter-spacing:0.0px;">6</span></div><div style="position:absolute;left:291.25px;top:111.02px;height:7.56px;line-height:7.56px;font-size:6.3px;color:#5a5a5a;white-space:nowrap;font-family:'Liberation Sans',sans-serif"><span style="font-family:'Liberation Sans';font-size:6.3px;letter-spacing:0.0px;">4</span></div><div style="position:absolute;left:319.05px;top:111.02px;height:7.56px;line-height:7.56px;font-size:6.3px;color:#5a5a5a;white-space:nowrap;font-family:'Liberation Sans',sans-serif"><span style="font-family:'Liberation Sans';font-size:6.3px;letter-spacing:0.0px;">2</span></div><div style="position:absolute;left:374.65px;top:111.02px;height:7.56px;line-height:7.56px;font-size:6.3px;color:#5a5a5a;white-space:nowrap;font-family:'Liberation Sans',sans-serif"><span style="font-family:'Liberation Sans';font-size:6.3px;letter-spacing:0.0px;">2</span></div><div style="position:absolute;left:402.45px;top:111.02px;height:7.56px;line-height:7.56px;font-size:6.3px;color:#5a5a5a;white-space:nowrap;font-family:'Liberation Sans',sans-serif"><span style="font-family:'Liberation Sans';font-size:6.3px;letter-spacing:0.0px;">4</span></div><div style="position:absolute;left:430.25px;top:111.02px;height:7.56px;line-height:7.56px;font-size:6.3px;color:#5a5a5a;white-space:nowrap;font-family:'Liberation Sans',sans-serif"><span style="font-family:'Liberation Sans';font-size:6.3px;letter-spacing:0.0px;">6</span></div><div style="position:absolute;left:458.05px;top:111.02px;height:7.56px;line-height:7.56px;font-size:6.3px;color:#5a5a5a;white-space:nowrap;font-family:'Liberation Sans',sans-serif"><span style="font-family:'Liberation Sans';font-size:6.3px;letter-spacing:0.0px;">8</span></div><div style="position:absolute;left:484.10px;top:111.02px;height:7.56px;line-height:7.56px;font-size:6.3px;color:#5a5a5a;white-space:nowrap;font-family:'Liberation Sans',sans-serif"><span style="font-family:'Liberation Sans';font-size:6.3px;letter-spacing:0.0px;">10</span></div><div style="position:absolute;left:511.90px;top:111.02px;height:7.56px;line-height:7.56px;font-size:6.3px;color:#5a5a5a;white-space:nowrap;font-family:'Liberation Sans',sans-serif"><span style="font-family:'Liberation Sans';font-size:6.3px;letter-spacing:0.0px;">12</span></div><div style="position:absolute;left:539.70px;top:111.02px;height:7.56px;line-height:7.56px;font-size:6.3px;color:#5a5a5a;white-space:nowrap;font-family:'Liberation Sans',sans-serif"><span style="font-family:'Liberation Sans';font-size:6.3px;letter-spacing:0.0px;">14</span></div><div style="position:absolute;left:567.50px;top:111.02px;height:7.56px;line-height:7.56px;font-size:6.3px;color:#5a5a5a;white-space:nowrap;font-family:'Liberation Sans',sans-serif"><span style="font-family:'Liberation Sans';font-size:6.3px;letter-spacing:0.0px;">16</span></div><div style="position:absolute;left:595.30px;top:111.02px;height:7.56px;line-height:7.56px;font-size:6.3px;color:#5a5a5a;white-space:nowrap;font-family:'Liberation Sans',sans-serif"><span style="font-family:'Liberation Sans';font-size:6.3px;letter-spacing:0.0px;">18</span></div><div style="position:absolute;left:623.10px;top:111.02px;height:7.56px;line-height:7.56px;font-size:6.3px;color:#5a5a5a;white-space:nowrap;font-family:'Liberation Sans',sans-serif"><span style="font-family:'Liberation Sans';font-size:6.3px;letter-spacing:0.0px;">20</span></div><div style="position:absolute;left:650.90px;top:111.02px;height:7.56px;line-height:7.56px;font-size:6.3px;color:#5a5a5a;white-space:nowrap;font-family:'Liberation Sans',sans-serif"><span style="font-family:'Liberation Sans';font-size:6.3px;letter-spacing:0.0px;">22</span></div><div style="position:absolute;left:678.70px;top:111.02px;height:7.56px;line-height:7.56px;font-size:6.3px;color:#5a5a5a;white-space:nowrap;font-family:'Liberation Sans',sans-serif"><span style="font-family:'Liberation Sans';font-size:6.3px;letter-spacing:0.0px;">24</span></div><div style="position:absolute;left:706.50px;top:111.02px;height:7.56px;line-height:7.56px;font-size:6.3px;color:#5a5a5a;white-space:nowrap;font-family:'Liberation Sans',sans-serif"><span style="font-family:'Liberation Sans';font-size:6.3px;letter-spacing:0.0px;">26</span></div><div style="position:absolute;left:734.30px;top:111.02px;height:7.56px;line-height:7.56px;font-size:6.3px;color:#5a5a5a;white-space:nowrap;font-family:'Liberation Sans',sans-serif"><span style="font-family:'Liberation Sans';font-size:6.3px;letter-spacing:0.0px;">28</span></div><div style="position:absolute;left:762.10px;top:111.02px;height:7.56px;line-height:7.56px;font-size:6.3px;color:#5a5a5a;white-space:nowrap;font-family:'Liberation Sans',sans-serif"><span style="font-family:'Liberation Sans';font-size:6.3px;letter-spacing:0.0px;">30</span></div><div style="position:absolute;left:789.90px;top:111.02px;height:7.56px;line-height:7.56px;font-size:6.3px;color:#5a5a5a;white-space:nowrap;font-family:'Liberation Sans',sans-serif"><span style="font-family:'Liberation Sans';font-size:6.3px;letter-spacing:0.0px;">32</span></div><div style="position:absolute;left:817.70px;top:111.02px;height:7.56px;line-height:7.56px;font-size:6.3px;color:#5a5a5a;white-space:nowrap;font-family:'Liberation Sans',sans-serif"><span style="font-family:'Liberation Sans';font-size:6.3px;letter-spacing:0.0px;">34</span></div><div style="position:absolute;left:845.50px;top:111.02px;height:7.56px;line-height:7.56px;font-size:6.3px;color:#5a5a5a;white-space:nowrap;font-family:'Liberation Sans',sans-serif"><span style="font-family:'Liberation Sans';font-size:6.3px;letter-spacing:0.0px;">36</span></div><div style="position:absolute;left:873.30px;top:111.02px;height:7.56px;line-height:7.56px;font-size:6.3px;color:#5a5a5a;white-space:nowrap;font-family:'Liberation Sans',sans-serif"><span style="font-family:'Liberation Sans';font-size:6.3px;letter-spacing:0.0px;">38</span></div><div style="position:absolute;left:901.10px;top:111.02px;height:7.56px;line-height:7.56px;font-size:6.3px;color:#5a5a5a;white-space:nowrap;font-family:'Liberation Sans',sans-serif"><span style="font-family:'Liberation Sans';font-size:6.3px;letter-spacing:0.0px;">40</span></div><div style="position:absolute;left:928.90px;top:111.02px;height:7.56px;line-height:7.56px;font-size:6.3px;color:#5a5a5a;white-space:nowrap;font-family:'Liberation Sans',sans-serif"><span style="font-family:'Liberation Sans';font-size:6.3px;letter-spacing:0.0px;">42</span></div><div style="position:absolute;left:956.70px;top:111.02px;height:7.56px;line-height:7.56px;font-size:6.3px;color:#5a5a5a;white-space:nowrap;font-family:'Liberation Sans',sans-serif"><span style="font-family:'Liberation Sans';font-size:6.3px;letter-spacing:0.0px;">44</span></div><div style="position:absolute;left:984.50px;top:111.02px;height:7.56px;line-height:7.56px;font-size:6.3px;color:#5a5a5a;white-space:nowrap;font-family:'Liberation Sans',sans-serif"><span style="font-family:'Liberation Sans';font-size:6.3px;letter-spacing:0.0px;">46</span></div><div style="position:absolute;left:1012.30px;top:111.02px;height:7.56px;line-height:7.56px;font-size:6.3px;color:#5a5a5a;white-space:nowrap;font-family:'Liberation Sans',sans-serif"><span style="font-family:'Liberation Sans';font-size:6.3px;letter-spacing:0.0px;">48</span></div><svg style="position:absolute;left:245px;top:109px;" width="785" height="10.5" viewBox="0 0 785 10.5"><path d="M13.2 3.3 V7.6" stroke="#6a6a6a" stroke-width="0.8"/><path d="M27.2 3.3 V7.6" stroke="#6a6a6a" stroke-width="0.8"/><path d="M41.0 3.3 V7.6" stroke="#6a6a6a" stroke-width="0.8"/><path d="M55.0 3.3 V7.6" stroke="#6a6a6a" stroke-width="0.8"/><path d="M68.8 3.3 V7.6" stroke="#6a6a6a" stroke-width="0.8"/><path d="M82.8 3.3 V7.6" stroke="#6a6a6a" stroke-width="0.8"/><path d="M96.6 3.3 V7.6" stroke="#6a6a6a" stroke-width="0.8"/><path d="M110.6 3.3 V7.6" stroke="#6a6a6a" stroke-width="0.8"/><path d="M124.4 3.3 V7.6" stroke="#6a6a6a" stroke-width="0.8"/><path d="M138.4 3.3 V7.6" stroke="#6a6a6a" stroke-width="0.8"/><path d="M152.2 3.3 V7.6" stroke="#6a6a6a" stroke-width="0.8"/><path d="M166.2 3.3 V7.6" stroke="#6a6a6a" stroke-width="0.8"/><path d="M180.0 3.3 V7.6" stroke="#6a6a6a" stroke-width="0.8"/><path d="M194.0 3.3 V7.6" stroke="#6a6a6a" stroke-width="0.8"/><path d="M207.8 3.3 V7.6" stroke="#6a6a6a" stroke-width="0.8"/><path d="M221.8 3.3 V7.6" stroke="#6a6a6a" stroke-width="0.8"/><path d="M235.6 3.3 V7.6" stroke="#6a6a6a" stroke-width="0.8"/><path d="M249.6 3.3 V7.6" stroke="#6a6a6a" stroke-width="0.8"/><path d="M263.4 3.3 V7.6" stroke="#6a6a6a" stroke-width="0.8"/><path d="M277.4 3.3 V7.6" stroke="#6a6a6a" stroke-width="0.8"/><path d="M291.2 3.3 V7.6" stroke="#6a6a6a" stroke-width="0.8"/><path d="M305.2 3.3 V7.6" stroke="#6a6a6a" stroke-width="0.8"/><path d="M319.0 3.3 V7.6" stroke="#6a6a6a" stroke-width="0.8"/><path d="M333.0 3.3 V7.6" stroke="#6a6a6a" stroke-width="0.8"/><path d="M346.8 3.3 V7.6" stroke="#6a6a6a" stroke-width="0.8"/><path d="M360.8 3.3 V7.6" stroke="#6a6a6a" stroke-width="0.8"/><path d="M374.6 3.3 V7.6" stroke="#6a6a6a" stroke-width="0.8"/><path d="M388.6 3.3 V7.6" stroke="#6a6a6a" stroke-width="0.8"/><path d="M402.4 3.3 V7.6" stroke="#6a6a6a" stroke-width="0.8"/><path d="M416.4 3.3 V7.6" stroke="#6a6a6a" stroke-width="0.8"/><path d="M430.2 3.3 V7.6" stroke="#6a6a6a" stroke-width="0.8"/><path d="M444.2 3.3 V7.6" stroke="#6a6a6a" stroke-width="0.8"/><path d="M458.0 3.3 V7.6" stroke="#6a6a6a" stroke-width="0.8"/><path d="M472.0 3.3 V7.6" stroke="#6a6a6a" stroke-width="0.8"/><path d="M485.8 3.3 V7.6" stroke="#6a6a6a" stroke-width="0.8"/><path d="M499.8 3.3 V7.6" stroke="#6a6a6a" stroke-width="0.8"/><path d="M513.6 3.3 V7.6" stroke="#6a6a6a" stroke-width="0.8"/><path d="M527.6 3.3 V7.6" stroke="#6a6a6a" stroke-width="0.8"/><path d="M541.4 3.3 V7.6" stroke="#6a6a6a" stroke-width="0.8"/><path d="M555.4 3.3 V7.6" stroke="#6a6a6a" stroke-width="0.8"/><path d="M569.2 3.3 V7.6" stroke="#6a6a6a" stroke-width="0.8"/><path d="M583.2 3.3 V7.6" stroke="#6a6a6a" stroke-width="0.8"/><path d="M597.0 3.3 V7.6" stroke="#6a6a6a" stroke-width="0.8"/><path d="M611.0 3.3 V7.6" stroke="#6a6a6a" stroke-width="0.8"/><path d="M624.8 3.3 V7.6" stroke="#6a6a6a" stroke-width="0.8"/><path d="M638.8 3.3 V7.6" stroke="#6a6a6a" stroke-width="0.8"/><path d="M652.6 3.3 V7.6" stroke="#6a6a6a" stroke-width="0.8"/><path d="M666.6 3.3 V7.6" stroke="#6a6a6a" stroke-width="0.8"/><path d="M680.4 3.3 V7.6" stroke="#6a6a6a" stroke-width="0.8"/><path d="M694.4 3.3 V7.6" stroke="#6a6a6a" stroke-width="0.8"/><path d="M708.2 3.3 V7.6" stroke="#6a6a6a" stroke-width="0.8"/><path d="M722.2 3.3 V7.6" stroke="#6a6a6a" stroke-width="0.8"/><path d="M736.0 3.3 V7.6" stroke="#6a6a6a" stroke-width="0.8"/><path d="M750.0 3.3 V7.6" stroke="#6a6a6a" stroke-width="0.8"/><path d="M763.8 3.3 V7.6" stroke="#6a6a6a" stroke-width="0.8"/><path d="M777.8 3.3 V7.6" stroke="#6a6a6a" stroke-width="0.8"/><path d="M0.6 3.3 V7.6" stroke="#6a6a6a" stroke-width="0.8"/></svg><svg style="position:absolute;left:344px;top:113px;" width="10" height="12" viewBox="0 0 10 12"><path d="M0.8 4.3 L5 0.6 L9.2 4.3 V7.2 H0.8 z M0.8 7.2 H9.2 V11.3 H0.8 z" fill="#fff" stroke="#8a8a8a" stroke-width="0.8"/></svg><svg style="position:absolute;left:381.6px;top:106.5px;" width="10" height="7" viewBox="0 0 10 7"><path d="M0.8 0.5 H9.2 V2.8 L5 6.3 L0.8 2.8 z" fill="#fff" stroke="#8a8a8a" stroke-width="0.8"/></svg><svg style="position:absolute;left:921px;top:113px;" width="10" height="8" viewBox="0 0 10 8"><path d="M0.8 4.3 L5 0.6 L9.2 4.3 V7.2 H0.8 z" fill="#fff" stroke="#8a8a8a" stroke-width="0.8"/></svg><div style="position:absolute;left:4.5px;top:108px;width:12px;height:13px;background:#fbfbfb;border:1px solid #e0e0e0;box-sizing:border-box;"></div><svg style="position:absolute;left:8px;top:111.5px;" width="5" height="6" viewBox="0 0 5 6"><path d="M0.8 0.5 V4.8 H4.5" fill="none" stroke="#555" stroke-width="1.1"/></svg><div style="position:absolute;left:4.5px;top:125px;width:11.5px;height:547px;background:#fff;"></div><div style="position:absolute;left:5.5px;top:126.9px;width:9.5px;height:8px;line-height:8px;font-size:6px;color:#555;text-align:center;transform:rotate(-90deg);font-family:'Liberation Sans'">2</div><div style="position:absolute;left:5.5px;top:147.5px;width:9.5px;height:8px;line-height:8px;font-size:6px;color:#555;text-align:center;transform:rotate(-90deg);font-family:'Liberation Sans'">3</div><div style="position:absolute;left:5.5px;top:168.1px;width:9.5px;height:8px;line-height:8px;font-size:6px;color:#555;text-align:center;transform:rotate(-90deg);font-family:'Liberation Sans'">4</div><div style="position:absolute;left:5.5px;top:188.7px;width:9.5px;height:8px;line-height:8px;font-size:6px;color:#555;text-align:center;transform:rotate(-90deg);font-family:'Liberation Sans'">5</div><div style="position:absolute;left:5.5px;top:209.3px;width:9.5px;height:8px;line-height:8px;font-size:6px;color:#555;text-align:center;transform:rotate(-90deg);font-family:'Liberation Sans'">6</div><div style="position:absolute;left:5.5px;top:229.9px;width:9.5px;height:8px;line-height:8px;font-size:6px;color:#555;text-align:center;transform:rotate(-90deg);font-family:'Liberation Sans'">7</div><div style="position:absolute;left:5.5px;top:250.5px;width:9.5px;height:8px;line-height:8px;font-size:6px;color:#555;text-align:center;transform:rotate(-90deg);font-family:'Liberation Sans'">8</div><div style="position:absolute;left:5.5px;top:271.1px;width:9.5px;height:8px;line-height:8px;font-size:6px;color:#555;text-align:center;transform:rotate(-90deg);font-family:'Liberation Sans'">9</div><div style="position:absolute;left:5.5px;top:291.7px;width:9.5px;height:8px;line-height:8px;font-size:6px;color:#555;text-align:center;transform:rotate(-90deg);font-family:'Liberation Sans'">10</div><div style="position:absolute;left:5.5px;top:312.3px;width:9.5px;height:8px;line-height:8px;font-size:6px;color:#555;text-align:center;transform:rotate(-90deg);font-family:'Liberation Sans'">11</div><div style="position:absolute;left:5.5px;top:332.9px;width:9.5px;height:8px;line-height:8px;font-size:6px;color:#555;text-align:center;transform:rotate(-90deg);font-family:'Liberation Sans'">12</div><div style="position:absolute;left:5.5px;top:353.5px;width:9.5px;height:8px;line-height:8px;font-size:6px;color:#555;text-align:center;transform:rotate(-90deg);font-family:'Liberation Sans'">13</div><div style="position:absolute;left:5.5px;top:374.1px;width:9.5px;height:8px;line-height:8px;font-size:6px;color:#555;text-align:center;transform:rotate(-90deg);font-family:'Liberation Sans'">14</div><div style="position:absolute;left:5.5px;top:394.7px;width:9.5px;height:8px;line-height:8px;font-size:6px;color:#555;text-align:center;transform:rotate(-90deg);font-family:'Liberation Sans'">15</div><div style="position:absolute;left:5.5px;top:415.3px;width:9.5px;height:8px;line-height:8px;font-size:6px;color:#555;text-align:center;transform:rotate(-90deg);font-family:'Liberation Sans'">16</div><div style="position:absolute;left:5.5px;top:435.9px;width:9.5px;height:8px;line-height:8px;font-size:6px;color:#555;text-align:center;transform:rotate(-90deg);font-family:'Liberation Sans'">17</div><div style="position:absolute;left:5.5px;top:456.5px;width:9.5px;height:8px;line-height:8px;font-size:6px;color:#555;text-align:center;transform:rotate(-90deg);font-family:'Liberation Sans'">18</div><div style="position:absolute;left:5.5px;top:477.1px;width:9.5px;height:8px;line-height:8px;font-size:6px;color:#555;text-align:center;transform:rotate(-90deg);font-family:'Liberation Sans'">19</div><div style="position:absolute;left:5.5px;top:497.7px;width:9.5px;height:8px;line-height:8px;font-size:6px;color:#555;text-align:center;transform:rotate(-90deg);font-family:'Liberation Sans'">20</div><div style="position:absolute;left:5.5px;top:518.3px;width:9.5px;height:8px;line-height:8px;font-size:6px;color:#555;text-align:center;transform:rotate(-90deg);font-family:'Liberation Sans'">21</div><div style="position:absolute;left:5.5px;top:538.9px;width:9.5px;height:8px;line-height:8px;font-size:6px;color:#555;text-align:center;transform:rotate(-90deg);font-family:'Liberation Sans'">22</div><div style="position:absolute;left:5.5px;top:559.5px;width:9.5px;height:8px;line-height:8px;font-size:6px;color:#555;text-align:center;transform:rotate(-90deg);font-family:'Liberation Sans'">23</div><div style="position:absolute;left:5.5px;top:580.1px;width:9.5px;height:8px;line-height:8px;font-size:6px;color:#555;text-align:center;transform:rotate(-90deg);font-family:'Liberation Sans'">24</div><div style="position:absolute;left:5.5px;top:600.7px;width:9.5px;height:8px;line-height:8px;font-size:6px;color:#555;text-align:center;transform:rotate(-90deg);font-family:'Liberation Sans'">25</div><div style="position:absolute;left:5.5px;top:621.3px;width:9.5px;height:8px;line-height:8px;font-size:6px;color:#555;text-align:center;transform:rotate(-90deg);font-family:'Liberation Sans'">26</div><div style="position:absolute;left:5.5px;top:641.9px;width:9.5px;height:8px;line-height:8px;font-size:6px;color:#555;text-align:center;transform:rotate(-90deg);font-family:'Liberation Sans'">27</div><div style="position:absolute;left:5.5px;top:662.5px;width:9.5px;height:8px;line-height:8px;font-size:6px;color:#555;text-align:center;transform:rotate(-90deg);font-family:'Liberation Sans'">28</div><svg style="position:absolute;left:4.5px;top:125px;" width="11.5" height="547" viewBox="0 0 11.5 547"><path d="M3.5 16.2 H8" stroke="#666" stroke-width="0.8"/><path d="M3.5 36.8 H8" stroke="#666" stroke-width="0.8"/><path d="M3.5 57.4 H8" stroke="#666" stroke-width="0.8"/><path d="M3.5 78.0 H8" stroke="#666" stroke-width="0.8"/><path d="M3.5 98.6 H8" stroke="#666" stroke-width="0.8"/><path d="M3.5 119.2 H8" stroke="#666" stroke-width="0.8"/><path d="M3.5 139.8 H8" stroke="#666" stroke-width="0.8"/><path d="M3.5 160.4 H8" stroke="#666" stroke-width="0.8"/><path d="M3.5 181.0 H8" stroke="#666" stroke-width="0.8"/><path d="M3.5 201.6 H8" stroke="#666" stroke-width="0.8"/><path d="M3.5 222.2 H8" stroke="#666" stroke-width="0.8"/><path d="M3.5 242.8 H8" stroke="#666" stroke-width="0.8"/><path d="M3.5 263.4 H8" stroke="#666" stroke-width="0.8"/><path d="M3.5 284.0 H8" stroke="#666" stroke-width="0.8"/><path d="M3.5 304.6 H8" stroke="#666" stroke-width="0.8"/><path d="M3.5 325.2 H8" stroke="#666" stroke-width="0.8"/><path d="M3.5 345.8 H8" stroke="#666" stroke-width="0.8"/><path d="M3.5 366.4 H8" stroke="#666" stroke-width="0.8"/><path d="M3.5 387.0 H8" stroke="#666" stroke-width="0.8"/><path d="M3.5 407.6 H8" stroke="#666" stroke-width="0.8"/><path d="M3.5 428.2 H8" stroke="#666" stroke-width="0.8"/><path d="M3.5 448.8 H8" stroke="#666" stroke-width="0.8"/><path d="M3.5 469.4 H8" stroke="#666" stroke-width="0.8"/><path d="M3.5 490.0 H8" stroke="#666" stroke-width="0.8"/><path d="M3.5 510.6 H8" stroke="#666" stroke-width="0.8"/><path d="M3.5 531.2 H8" stroke="#666" stroke-width="0.8"/></svg><div style="position:absolute;left:246.5px;top:126px;width:783.5px;height:546px;background:#fff;box-shadow:0 0 0 0.5px #d0d0d0;"></div><div style="position:absolute;left:435.50px;top:139.29px;height:29.76px;line-height:29.76px;font-size:24.8px;color:#151515;white-space:nowrap;font-family:'Liberation Sans',sans-serif"><span class="c" style="font-size:24.8px;letter-spacing:-0.6px;">五届第三</span></div><div style="position:absolute;left:386.80px;top:214.14px;height:24.96px;line-height:24.96px;font-size:20.8px;color:#151515;white-space:nowrap;font-family:'Liberation Sans',sans-serif"><span class="d">计算机科学与技术</span></div><div style="position:absolute;left:349.30px;top:249.14px;height:24.96px;line-height:24.96px;font-size:20.8px;color:#151515;white-space:nowrap;font-family:'Liberation Sans',sans-serif"><span class="d">次会议于</span><span style="font-family:'Liberation Sans';font-size:19.4px;letter-spacing:0.0px;">&nbsp;2022&nbsp;</span><span class="d">年</span><span style="font-family:'Liberation Sans';font-size:19.4px;letter-spacing:0.0px;">&nbsp;3</span></div><div style="position:absolute;left:386.80px;top:284.84px;height:24.96px;line-height:24.96px;font-size:20.8px;color:#151515;white-space:nowrap;font-family:'Liberation Sans',sans-serif"><span class="d">大会听取了院长代</span></div><div style="position:absolute;left:349.30px;top:320.54px;height:24.96px;line-height:24.96px;font-size:20.8px;color:#151515;white-space:nowrap;font-family:'Liberation Sans',sans-serif"><span class="d">年工作报告。大会认</span></div><div style="position:absolute;left:349.30px;top:356.14px;height:24.96px;line-height:24.96px;font-size:20.8px;color:#151515;white-space:nowrap;font-family:'Liberation Sans',sans-serif"><span class="d">院</span><span style="font-family:'Liberation Sans';font-size:19.4px;letter-spacing:0.0px;">&nbsp;2022&nbsp;</span><span class="d">年的主要工</span></div><div style="position:absolute;left:349.30px;top:391.34px;height:24.96px;line-height:24.96px;font-size:20.8px;color:#151515;white-space:nowrap;font-family:'Liberation Sans',sans-serif"><span class="d">问题。报告提出的工</span></div><div style="position:absolute;left:349.30px;top:427.64px;height:24.96px;line-height:24.96px;font-size:20.8px;color:#151515;white-space:nowrap;font-family:'Liberation Sans',sans-serif"><span class="d">际，切实可行的，有</span></div><div style="position:absolute;left:349.30px;top:463.44px;height:24.96px;line-height:24.96px;font-size:20.8px;color:#151515;white-space:nowrap;font-family:'Liberation Sans',sans-serif"><span class="d">积极性和创造性，对</span></div><div style="position:absolute;left:349.30px;top:498.44px;height:24.96px;line-height:24.96px;font-size:20.8px;color:#151515;white-space:nowrap;font-family:'Liberation Sans',sans-serif"><span class="d">作用。</span></div><div style="position:absolute;left:386.80px;top:529.84px;height:24.96px;line-height:24.96px;font-size:20.8px;color:#151515;white-space:nowrap;font-family:'Liberation Sans',sans-serif"><span class="d">教职工在讨论中提</span></div><div style="position:absolute;left:349.30px;top:565.74px;height:24.96px;line-height:24.96px;font-size:20.8px;color:#151515;white-space:nowrap;font-family:'Liberation Sans',sans-serif"><span class="d">议。大会认为，对这</span></div><div style="position:absolute;left:349.30px;top:599.04px;height:24.96px;line-height:24.96px;font-size:20.8px;color:#151515;white-space:nowrap;font-family:'Liberation Sans',sans-serif"><span class="d">纳。</span></div><div style="position:absolute;left:386.80px;top:632.54px;height:24.96px;line-height:24.96px;font-size:20.8px;color:#151515;white-space:nowrap;font-family:'Liberation Sans',sans-serif"><span class="d">大会指出，学院要以立德树人根本任务，以落实“三全育人”</span></div><div style="position:absolute;left:349.30px;top:666.24px;height:24.96px;line-height:24.96px;font-size:20.8px;color:#151515;white-space:nowrap;font-family:'Liberation Sans',sans-serif"><span class="d">为契机，进一步加强学院人才培养、学科建设、人才队伍建设，完</span></div><svg style="position:absolute;left:411px;top:505.3px;" width="11" height="10" viewBox="0 0 11 10"><path d="M9.5 0.8 V6 H1.5 M4 3.5 L1.5 6 L4 8.5" fill="none" stroke="#8c8c8c" stroke-width="1"/></svg><svg style="position:absolute;left:391px;top:606px;" width="11" height="10" viewBox="0 0 11 10"><path d="M9.5 0.8 V6 H1.5 M4 3.5 L1.5 6 L4 8.5" fill="none" stroke="#8c8c8c" stroke-width="1"/></svg><div style="position:absolute;left:501px;top:130px;width:738px;height:519px;background:#141517;overflow:hidden;clip-path:polygon(0 0,100% 0,100% 100%,11px 100%,0 508px)"><div style="position:absolute;left:7.5px;top:11.5px;width:9px;height:1.6px;background:#8e8e8e;border-radius:1px;"></div><svg style="position:absolute;left:23px;top:7px;" width="10" height="10.5" viewBox="0 0 10 10.5"><rect x="0.7" y="1.2" width="8.6" height="8.3" rx="1.2" fill="none" stroke="#8a8c90" stroke-width="1.3"/><path d="M0.7 1.6 H9.3" stroke="#8a8c90" stroke-width="2"/></svg><svg style="position:absolute;left:38.5px;top:6px;" width="10" height="11.5" viewBox="0 0 10 11.5"><rect x="0.5" y="0.5" width="9" height="2.6" rx="1.3" fill="#1a6ff2"/><rect x="0" y="4.3" width="10" height="2.8" rx="1.4" fill="#1a6ff2"/><rect x="0.5" y="8.3" width="9" height="2.6" rx="1.3" fill="#1a6ff2"/></svg><svg style="position:absolute;left:720px;top:7px;" width="12" height="10" viewBox="0 0 12 10"><path d="M0.5 1 H11 M0.5 5 H6.5 M0.5 9 H11 M8 3 L10.5 5 L8 7" fill="none" stroke="#8f9196" stroke-width="1"/></svg><div style="position:absolute;left:0px;top:24px;width:738px;height:24px;background:#2b2e32;"></div><div style="position:absolute;left:0px;top:24px;width:25px;height:24px;background:#26282c;"></div><svg style="position:absolute;left:7.5px;top:30px;" width="9" height="12" viewBox="0 0 9 12"><rect x="2.6" y="0.5" width="3.8" height="7" rx="1.9" fill="#6f7277"/><path d="M0.8 5.5 a3.7 3.7 0 0 0 7.4 0 M4.5 9.2 V11.5" fill="none" stroke="#6f7277" stroke-width="1.1"/></svg><div style="position:absolute;left:29.60px;top:31.71px;height:9.60px;line-height:9.60px;font-size:8.0px;color:#f0f0f0;white-space:nowrap;font-family:'Liberation Sans',sans-serif"><span class="c" style="font-size:8.0px;">正在讲话</span><span style="font-family:'Liberation Sans';font-size:7.5px;letter-spacing:0.0px;">:</span></div><svg style="position:absolute;left:700px;top:28px;" width="30" height="16" viewBox="0 0 30 16"><path d="M1 9 L9 1.5 L14 6 L6.5 14 z M12 9.5 L18 3.5 L27 11 L22 15 L17 10.5 L14 14 z" fill="#4a4d52"/></svg><div style="position:absolute;left:39px;top:49.400000000000006px;width:164.1px;height:92.6px;background:#2d3033;"></div><div style="position:absolute;left:204.10000000000002px;top:49.400000000000006px;width:164.1px;height:92.6px;background:#2d3033;"></div><div style="position:absolute;left:369.20000000000005px;top:49.400000000000006px;width:164.1px;height:92.6px;background:#2d3033;"></div><div style="position:absolute;left:534.3px;top:49.400000000000006px;width:164.1px;height:92.6px;background:#2d3033;"></div><div style="position:absolute;left:39px;top:143px;width:164.1px;height:92.6px;background:#2d3033;"></div><div style="position:absolute;left:204.10000000000002px;top:143px;width:164.1px;height:92.6px;background:#2d3033;"></div><div style="position:absolute;left:369.20000000000005px;top:143px;width:164.1px;height:92.6px;background:#2d3033;"></div><div style="position:absolute;left:534.3px;top:143px;width:164.1px;height:92.6px;background:#2d3033;"></div><div style="position:absolute;left:39px;top:236.60000000000002px;width:164.1px;height:92.6px;background:#2d3033;"></div><div style="position:absolute;left:204.10000000000002px;top:236.60000000000002px;width:164.1px;height:92.6px;background:#2d3033;"></div><div style="position:absolute;left:369.20000000000005px;top:236.60000000000002px;width:164.1px;height:92.6px;background:#2d3033;"></div><div style="position:absolute;left:534.3px;top:236.60000000000002px;width:164.1px;height:92.6px;background:#2d3033;"></div><div style="position:absolute;left:39px;top:330.2px;width:164.1px;height:92.6px;background:#2d3033;"></div><div style="position:absolute;left:204.10000000000002px;top:330.2px;width:164.1px;height:92.6px;background:#2d3033;"></div><div style="position:absolute;left:369.20000000000005px;top:330.2px;width:164.1px;height:92.6px;background:#2d3033;"></div><div style="position:absolute;left:534.3px;top:330.2px;width:164.1px;height:92.6px;background:#2d3033;"></div><div style="position:absolute;left:286.70000000000005px;top:423.79999999999995px;width:164.1px;height:96px;background:#2d3033;"></div><svg style="position:absolute;left:97.54999999999995px;top:64.4px;" width="47" height="47" viewBox="0 0 47 47"><defs><clipPath id="c540_179"><circle cx="23.5" cy="23.5" r="23.4"/></clipPath><filter id="fc540_179" x="-10%" y="-10%" width="120%" height="120%"><feGaussianBlur stdDeviation="0.45"/></filter></defs><g clip-path="url(#c540_179)"><rect width="47" height="47" fill="#888"/><g filter="url(#fc540_179)"><rect width="47" height="47" fill="#f6b912"/><path d="M21 20 Q19 12 24 10 Q27 7 31 9 Q36 8 38 13 Q41 17 38 22 L36 20 Q30 17 23 21 z" fill="#6b3414"/><path d="M22.5 21 Q29 17 36 20 Q37 27 33 29.5 Q28 31 24 28 Q22 25 22.5 21 z" fill="#f7cfae"/><path d="M26 25.5 q3.5 4 7 0 z" fill="#7a1f16"/><path d="M20 31 q9-4 17 0 l3 15 h-22 z" fill="#8ccf3f"/><path d="M19 35 h20 M19 39 h21 M19 43 h22" stroke="#dff0a8" stroke-width="1.5"/><path d="M19 31 L16 27 L19 25 L23 30 z" fill="#8ccf3f"/><rect x="12" y="20.5" width="7.5" height="11" rx="1" fill="#2aa5ea"/><rect x="13.5" y="22.5" width="4.5" height="5" fill="#9fe0ff"/><rect x="13" y="28" width="5" height="2.5" fill="#157a3a"/><path d="M12 33 h9 l2 10 h-10 z" fill="#e8331c"/><path d="M14 36 l6 5 M20 35 l-6 6" stroke="#f7a21a" stroke-width="1.2"/><ellipse cx="7.5" cy="13.5" rx="1.5" ry="2.5" fill="#ffd9d0" transform="rotate(-20 7.5 13.5)"/><ellipse cx="18.5" cy="11" rx="1.5" ry="2.5" fill="#ffd9d0" transform="rotate(-25 18.5 11)"/><ellipse cx="6" cy="24" rx="2.3" ry="1.5" fill="#ffcfc4" transform="rotate(-30 6 24)"/><ellipse cx="10" cy="41" rx="1.3" ry="2" fill="#ffd9d0"/></g></g></svg><div style="position:absolute;left:262.65px;top:64.4px;width:47px;height:47px;background:#1677ff;border-radius:50%;"></div><div style="position:absolute;left:274.55px;top:81.98px;height:13.92px;line-height:13.92px;font-size:11.6px;color:#fff;white-space:nowrap;font-family:'Liberation Sans',sans-serif"><span class="c" style="font-size:11.6px;">文娟</span></div><svg style="position:absolute;left:427.75px;top:64.4px;" width="47" height="47" viewBox="0 0 47 47"><defs><clipPath id="c870_179"><circle cx="23.5" cy="23.5" r="23.4"/></clipPath><filter id="fc870_179" x="-10%" y="-10%" width="120%" height="120%"><feGaussianBlur stdDeviation="0.7"/></filter></defs><g clip-path="url(#c870_179)"><rect width="47" height="47" fill="#888"/><g filter="url(#fc870_179)"><rect width="47" height="47" fill="#6f5d52"/><rect x="0" y="0" width="47" height="20" fill="#9b8680"/><ellipse cx="36" cy="14" rx="12" ry="11" fill="#a88486"/><ellipse cx="19" cy="4" rx="8" ry="5" fill="#dcdcdc"/><ellipse cx="30" cy="5" rx="5" ry="3" fill="#b59a98"/><ellipse cx="3" cy="22" rx="5" ry="9" fill="#3d4a34"/><ellipse cx="42" cy="27" rx="7" ry="7" fill="#4a4a3a"/><ellipse cx="44" cy="18" rx="4" ry="5" fill="#5a4a48"/><path d="M4 11.5 L30 14.5 L29.5 20 L5 17 z" fill="#8a2d33"/><path d="M4 11.5 L30 14.5 L30 16 L4 13 z" fill="#a8434a"/><rect x="6.5" y="16" width="3.2" height="16" fill="#6c2228"/><rect x="19" y="18" width="3" height="13" fill="#6c2228"/><rect x="27" y="19" width="2" height="11" fill="#5a2024"/><rect x="9.7" y="18" width="9.3" height="12" fill="#2f2d20"/><rect x="22" y="20" width="5" height="9" fill="#3a3a2a"/><ellipse cx="15" cy="25" rx="3" ry="3" fill="#5a6a3a"/><path d="M0 32 Q23 28 47 31 V47 H0 z" fill="#86a35c"/><path d="M12 47 L19 36 L27 31 L32 32 L24 38 L21 47 z" fill="#c9bcb4"/><ellipse cx="8" cy="38" rx="8" ry="5" fill="#8fae68"/><ellipse cx="37" cy="40" rx="10" ry="6" fill="#7fac50"/><ellipse cx="35" cy="34" rx="6" ry="2" fill="#a9c27a"/></g></g></svg><svg style="position:absolute;left:592.8499999999999px;top:64.4px;" width="47" height="47" viewBox="0 0 47 47"><defs><clipPath id="c1035_179"><circle cx="23.5" cy="23.5" r="23.4"/></clipPath><filter id="fc1035_179" x="-10%" y="-10%" width="120%" height="120%"><feGaussianBlur stdDeviation="0.6"/></filter></defs><g clip-path="url(#c1035_179)"><rect width="47" height="47" fill="#888"/><g filter="url(#fc1035_179)"><rect width="47" height="47" fill="#2c80d9"/><rect y="0" width="47" height="4" fill="#b8d8f4"/><rect x="0" y="33" width="47" height="14" fill="#e9e6da"/><ellipse cx="13" cy="17" rx="7" ry="7" fill="#3c4a2c"/><ellipse cx="17" cy="12" rx="5" ry="4" fill="#4a5330"/><ellipse cx="8" cy="24" rx="7" ry="6" fill="#2f4a38"/><ellipse cx="18" cy="23" rx="6" ry="6" fill="#4f4a2a"/><ellipse cx="12" cy="31" rx="8" ry="4" fill="#35503a"/><ellipse cx="21" cy="30" rx="4" ry="6" fill="#3a3a22"/><rect x="12.5" y="24" width="1.8" height="16" fill="#26301f"/><ellipse cx="26" cy="33" rx="3.5" ry="8" fill="#5c4a26"/><ellipse cx="35.5" cy="28" rx="3.5" ry="4.5" fill="#77683e"/><ellipse cx="30" cy="30" rx="2" ry="3" fill="#8a8a5a"/><rect x="1" y="32" width="10" height="7" fill="#cfe0f2"/><rect x="17" y="38" width="12" height="3" fill="#cfcfc8"/><rect x="33" y="30" width="9" height="4" fill="#f4f4f4"/><ellipse cx="28" cy="38" rx="2" ry="2.5" fill="#b8242a"/><path d="M31.5 35 q7-3 14-0.5 v9 q-7 4-14 0.5 z" fill="#e8453c"/><path d="M36 37.5 l4 2 -4 2.5 z" fill="#f9b4ac"/><path d="M1.5 15 a23 23 0 0 0 0 17" stroke="#fff" stroke-width="2" fill="none"/><path d="M45.5 15 a23 23 0 0 1 0 17" stroke="#fff" stroke-width="1.6" fill="none"/><path d="M14 1.2 a23 23 0 0 1 19 0" stroke="#e8f0fa" stroke-width="1.5" fill="none"/></g></g></svg><div style="position:absolute;left:97.54999999999995px;top:158.0px;width:47px;height:47px;background:#1677ff;border-radius:50%;"></div><div style="position:absolute;left:109.45px;top:175.58px;height:13.92px;line-height:13.92px;font-size:11.6px;color:#fff;white-space:nowrap;font-family:'Liberation Sans',sans-serif"><span class="c" style="font-size:11.6px;">高明</span></div><svg style="position:absolute;left:262.65px;top:158.0px;" width="47" height="47" viewBox="0 0 47 47"><defs><clipPath id="c705_273"><circle cx="23.5" cy="23.5" r="23.4"/></clipPath><filter id="fc705_273" x="-10%" y="-10%" width="120%" height="120%"><feGaussianBlur stdDeviation="0.6"/></filter></defs><g clip-path="url(#c705_273)"><rect width="47" height="47" fill="#888"/><g filter="url(#fc705_273)"><rect width="47" height="47" fill="#5b5650"/><rect x="24" y="0" width="23" height="47" fill="#6a655f"/><circle cx="32" cy="6" r="4" fill="#bdbdbd"/><circle cx="40" cy="15" r="3" fill="#9a958c"/><circle cx="30" cy="24" r="2.5" fill="#a9a49a"/><circle cx="41" cy="30" r="3" fill="#8f8a80"/><circle cx="34" cy="38" r="3" fill="#7d6e5e"/><path d="M3 18 Q4 2 18 3 Q30 4 28 18 L24 16 Q14 13 6 19 z" fill="#0e0e10"/><path d="M4 18 Q14 13 25 17 L24 32 Q16 40 7 35 Q3 28 4 18 z" fill="#f2c4b6"/><ellipse cx="12.5" cy="22.5" rx="4.5" ry="3.4" fill="#141210"/><ellipse cx="22" cy="22.5" rx="3.6" ry="3" fill="#141210"/><circle cx="11" cy="22" r="1.5" fill="#8f8456"/><path d="M12 30 q4 2 8 0" stroke="#c9747a" stroke-width="1.5" fill="none"/><path d="M5 34 Q14 41 22 36 L24 40 L12 44 z" fill="#e9edf0"/><path d="M14 44 L24 38 L27 47 H18 z" fill="#1273b8"/><path d="M0 36 L12 43 L18 47 H0 z" fill="#2a2c30"/></g></g></svg><svg style="position:absolute;left:427.75px;top:158.0px;" width="47" height="47" viewBox="0 0 47 47"><defs><clipPath id="c870_273"><circle cx="23.5" cy="23.5" r="23.4"/></clipPath><filter id="fc870_273" x="-10%" y="-10%" width="120%" height="120%"><feGaussianBlur stdDeviation="0.6"/></filter></defs><g clip-path="url(#c870_273)"><rect width="47" height="47" fill="#888"/><g filter="url(#fc870_273)"><rect width="47" height="47" fill="#3f9fb0"/><path d="M0 0 H47 V12 L0 18 z" fill="#dfe6ee"/><path d="M0 17 L32 3 L47 8 V20 H0 z" fill="#3d4a48"/><rect x="16" y="17" width="14" height="4" fill="#b4553a"/><rect x="30" y="16" width="17" height="5" fill="#3e5230"/><rect x="0" y="18" width="16" height="3" fill="#2a3a3c"/><path d="M0 21 H47 V36 L30 44 L0 30 z" fill="#3fa3b4"/><path d="M0 23 L47 40 V47 H0 z" fill="#7fc4d2"/><path d="M0 27 L40 47 H0 z" fill="#c9d6dc"/><path d="M0 36 L26 47 H0 z" fill="#9aa3a8"/><ellipse cx="19" cy="31" rx="3" ry="3.5" fill="#cfd3e2"/><circle cx="19" cy="26.5" r="1.8" fill="#2f4f78"/><path d="M16 34 h6 l.5 5 h-2 l-.5-3 h-2 l-.5 3 h-2 z" fill="#27364e"/></g></g></svg><div style="position:absolute;left:592.8499999999999px;top:158.0px;width:47px;height:47px;background:#1677ff;border-radius:50%;"></div><div style="position:absolute;left:604.75px;top:175.58px;height:13.92px;line-height:13.92px;font-size:11.6px;color:#fff;white-space:nowrap;font-family:'Liberation Sans',sans-serif"><span class="c" style="font-size:11.6px;">海峰</span></div><svg style="position:absolute;left:97.54999999999995px;top:251.60000000000002px;" width="47" height="47" viewBox="0 0 47 47"><defs><clipPath id="c540_366"><circle cx="23.5" cy="23.5" r="23.4"/></clipPath><filter id="fc540_366" x="-10%" y="-10%" width="120%" height="120%"><feGaussianBlur stdDeviation="0.6"/></filter></defs><g clip-path="url(#c540_366)"><rect width="47" height="47" fill="#888"/><g filter="url(#fc540_366)"><rect width="47" height="47" fill="#cfe3b5"/><ellipse cx="8" cy="10" rx="10" ry="12" fill="#8fb356"/><ellipse cx="40" cy="10" rx="10" ry="12" fill="#86aa50"/><ellipse cx="24" cy="4" rx="9" ry="5" fill="#eef3e6"/><ellipse cx="40" cy="34" rx="8" ry="12" fill="#a9c77a"/><ellipse cx="5" cy="36" rx="7" ry="11" fill="#b9d28e"/><path d="M30 47 L40 14" stroke="#6e5b3a" stroke-width="1.5"/><path d="M0 24 Q10 19 18 21 L24 20 L30 21 Q40 19 47 24 L47 28 Q36 25 30 28 L30 47 H18 L18 28 Q10 25 0 28 z" fill="#c2a81e"/><circle cx="23.5" cy="15" r="4.3" fill="#c99a72"/><path d="M19 13 q4.5-6 9 0 l-1 1 q-3.5-2-7 0 z" fill="#1a1612"/><rect x="21" y="40" width="6" height="7" fill="#3a3a30"/></g></g></svg><svg style="position:absolute;left:262.65px;top:251.60000000000002px;" width="47" height="47" viewBox="0 0 47 47"><defs><clipPath id="c705_366"><circle cx="23.5" cy="23.5" r="23.4"/></clipPath><filter id="fc705_366" x="-10%" y="-10%" width="120%" height="120%"><feGaussianBlur stdDeviation="0.5"/></filter></defs><g clip-path="url(#c705_366)"><rect width="47" height="47" fill="#888"/><g filter="url(#fc705_366)"><rect width="47" height="47" fill="#f0384d"/><path d="M23 0 q2 5 1 9" stroke="#d42c40" stroke-width="1.5" fill="none"/><path d="M12 22 l7 2.5 M35 22 l-7 2.5" stroke="#5a0f18" stroke-width="1.8"/><rect x="14" y="24.5" width="2.6" height="3.6" fill="#4a0c14"/><rect x="30.5" y="24.5" width="2.6" height="3.6" fill="#4a0c14"/><path d="M14 35 q9-7 19 0 q-2 6-9.5 6 T14 35 z" fill="#f5cf3a"/><path d="M19 36.5 h8" stroke="#6a4a10" stroke-width="1.5"/><rect x="12" y="33.5" width="4" height="3" fill="#fde8d8"/></g></g></svg><svg style="position:absolute;left:427.75px;top:251.60000000000002px;" width="47" height="47" viewBox="0 0 47 47"><defs><clipPath id="c870_366"><circle cx="23.5" cy="23.5" r="23.4"/></clipPath><filter id="fc870_366" x="-10%" y="-10%" width="120%" height="120%"><feGaussianBlur stdDeviation="0.7"/></filter></defs><g clip-path="url(#c870_366)"><rect width="47" height="47" fill="#888"/><g filter="url(#fc870_366)"><rect width="47" height="47" fill="#3f9a30"/><rect width="47" height="14" fill="#d3dbe6"/><ellipse cx="9" cy="10" rx="8" ry="4" fill="#e0c8cc"/><ellipse cx="27" cy="10" rx="10" ry="9" fill="#4a8f3a"/><ellipse cx="24" cy="5" rx="3" ry="4" fill="#7fb86a"/><ellipse cx="40" cy="16" rx="8" ry="8" fill="#5c8a3c"/><ellipse cx="11" cy="13" rx="6" ry="2.5" fill="#a9523e"/><ellipse cx="6" cy="17" rx="6" ry="3" fill="#6f6a3a"/><ellipse cx="14" cy="22" rx="10" ry="5" fill="#2f5a2a"/><ellipse cx="30" cy="22" rx="12" ry="6" fill="#2c5528"/><ellipse cx="42" cy="24" rx="6" ry="5" fill="#3a6a30"/><ellipse cx="22" cy="20" rx="4" ry="4" fill="#5a8a4a"/><ellipse cx="34" cy="17" rx="4" ry="3" fill="#6a9a50"/><path d="M0 28 Q23 25 47 29 V47 H0 z" fill="#43a032"/><ellipse cx="28" cy="32" rx="15" ry="3" fill="#8fc26a"/><ellipse cx="8" cy="30" rx="7" ry="2" fill="#7ab85a"/><ellipse cx="20" cy="41" rx="12" ry="5" fill="#2f8a26"/><ellipse cx="38" cy="41" rx="7" ry="4" fill="#5aa848"/></g></g></svg><svg style="position:absolute;left:592.8499999999999px;top:251.60000000000002px;" width="47" height="47" viewBox="0 0 47 47"><defs><clipPath id="c1035_366"><circle cx="23.5" cy="23.5" r="23.4"/></clipPath><filter id="fc1035_366" x="-10%" y="-10%" width="120%" height="120%"><feGaussianBlur stdDeviation="0.6"/></filter></defs><g clip-path="url(#c1035_366)"><rect width="47" height="47" fill="#888"/><g filter="url(#fc1035_366)"><rect width="47" height="47" fill="#a9cde0"/><path d="M4 16 Q23 -8 43 16 L44 20 H3 z" fill="#e8cf6a"/><path d="M3 17 Q23 9 44 17 L45 21 Q23 14 2 21 z" fill="#d9b850"/><path d="M7 19 Q23 13 40 19 L41 33 L36 27 L34 31 L30 25 L24 29 L18 24 L14 31 L11 26 L7 34 z" fill="#1c2230"/><path d="M10 25 Q23 20 37 25 L36 38 Q23 47 11 38 z" fill="#f8e0d0"/><path d="M10 24 L14 31 L17 24 L24 29 L30 24 L33 30 L37 24 L38 20 L9 20 z" fill="#1c2230"/><path d="M14 30 q3-2 6 0 M27 30 q3-2 6 0" stroke="#333" stroke-width="0.9" fill="none"/><path d="M16 35 Q23.5 34 31 35 Q29 42 23.5 42 T16 35 z" fill="#b84848"/><path d="M17 35.5 h13 l-1 2 h-11 z" fill="#fff"/><path d="M12 43 Q23 47 35 43 L38 47 H9 z" fill="#8cc0e8"/></g></g></svg><svg style="position:absolute;left:97.54999999999995px;top:345.2px;" width="47" height="47" viewBox="0 0 47 47"><defs><clipPath id="c540_460"><circle cx="23.5" cy="23.5" r="23.4"/></clipPath><filter id="fc540_460" x="-10%" y="-10%" width="120%" height="120%"><feGaussianBlur stdDeviation="0.6"/></filter></defs><g clip-path="url(#c540_460)"><rect width="47" height="47" fill="#888"/><g filter="url(#fc540_460)"><rect width="47" height="47" fill="#4d5872"/><ellipse cx="8" cy="10" rx="6" ry="5" fill="#b9c0d4"/><ellipse cx="20" cy="6" rx="7" ry="4" fill="#262a3a"/><ellipse cx="34" cy="8" rx="7" ry="5" fill="#9aa3bd"/><ellipse cx="43" cy="17" rx="5" ry="6" fill="#c8cde0"/><ellipse cx="6" cy="24" rx="6" ry="6" fill="#d4d8e6"/><ellipse cx="14" cy="16" rx="5" ry="4" fill="#7d87a6"/><ellipse cx="34" cy="22" rx="6" ry="5" fill="#30364a"/><ellipse cx="42" cy="31" rx="6" ry="6" fill="#aab2c9"/><ellipse cx="9" cy="37" rx="7" ry="5" fill="#9ea7c0"/><ellipse cx="21" cy="41" rx="7" ry="5" fill="#c6ccdc"/><ellipse cx="35" cy="40" rx="7" ry="5" fill="#8791ad"/><ellipse cx="18" cy="28" rx="5" ry="4" fill="#2a2f42"/><ellipse cx="30" cy="32" rx="5" ry="4" fill="#bfc6d8"/><ellipse cx="40" cy="8" rx="4" ry="3" fill="#2a2e40"/><path d="M22 47 Q23 30 24 18" stroke="#8fd24a" stroke-width="3" fill="none"/><path d="M24 19 Q18 12 15 4 Q22 8 25 16 z" fill="#7fc93e"/><path d="M24 20 Q30 12 35 10 Q32 18 26 22 z" fill="#a4dd5c"/></g></g></svg><svg style="position:absolute;left:262.65px;top:345.2px;" width="47" height="47" viewBox="0 0 47 47"><defs><clipPath id="c705_460"><circle cx="23.5" cy="23.5" r="23.4"/></clipPath><filter id="fc705_460" x="-10%" y="-10%" width="120%" height="120%"><feGaussianBlur stdDeviation="0.7"/></filter></defs><g clip-path="url(#c705_460)"><rect width="47" height="47" fill="#888"/><g filter="url(#fc705_460)"><rect width="47" height="47" fill="#c9cbc6"/><rect y="0" width="47" height="20" fill="#dcdedb"/><path d="M6 4 V20 M41 6 V20 M6 6 Q23 18 41 8" stroke="#6e6e6a" stroke-width="1.2" fill="none"/><rect x="2" y="19" width="22" height="2" fill="#4a4a44"/><path d="M8 8 L20 19 M12 6 L22 19" stroke="#77776f" stroke-width="0.7"/><rect y="21" width="47" height="14" fill="#b9bdb6"/><path d="M0 35 Q23 31 47 36 V47 H0 z" fill="#4a5a30"/><path d="M0 38 Q20 35 30 47 H0 z" fill="#6a7a3a"/><ellipse cx="28" cy="33" rx="2.2" ry="4.5" fill="#1f2126"/><circle cx="28" cy="27.5" r="1.6" fill="#1f2126"/><ellipse cx="33.5" cy="34" rx="1.8" ry="3.5" fill="#3a4a6a"/><circle cx="33.5" cy="29.5" r="1.3" fill="#2a2a2a"/></g></g></svg><svg style="position:absolute;left:427.75px;top:345.2px;" width="47" height="47" viewBox="0 0 47 47"><defs><clipPath id="c870_460"><circle cx="23.5" cy="23.5" r="23.4"/></clipPath><filter id="fc870_460" x="-10%" y="-10%" width="120%" height="120%"><feGaussianBlur stdDeviation="0.6"/></filter></defs><g clip-path="url(#c870_460)"><rect width="47" height="47" fill="#888"/><g filter="url(#fc870_460)"><rect width="47" height="47" fill="#1f6fe0"/><path d="M0 20 Q24 30 47 26 V32 Q24 36 0 26 z" fill="#f2b45a"/><path d="M0 26 Q24 36 47 32 V38 Q22 40 0 32 z" fill="#5a3a2a"/><path d="M33 6 L28 28 M33 6 L38 28 M30 18 h6" stroke="#f0d8a0" stroke-width="1.3" fill="none"/><path d="M33 6 L12 23 M33 6 L20 25 M33 6 L44 27" stroke="#9ec0f0" stroke-width="0.5"/><circle cx="10" cy="12" r="1" fill="#cfe0ff"/><circle cx="5" cy="19" r="1" fill="#ffe9b0"/><path d="M0 33 Q22 41 47 38 V47 H0 z" fill="#2a2f5a"/><path d="M10 42 Q24 46 38 42" stroke="#f09a30" stroke-width="2.5" fill="none"/><path d="M14 38 v6 M22 39 v6 M30 39 v5" stroke="#ffd27a" stroke-width="1"/></g></g></svg><svg style="position:absolute;left:592.8499999999999px;top:345.2px;" width="47" height="47" viewBox="0 0 47 47"><defs><clipPath id="c1035_460"><circle cx="23.5" cy="23.5" r="23.4"/></clipPath><filter id="fc1035_460" x="-10%" y="-10%" width="120%" height="120%"><feGaussianBlur stdDeviation="0.7"/></filter></defs><g clip-path="url(#c1035_460)"><rect width="47" height="47" fill="#888"/><g filter="url(#fc1035_460)"><rect width="47" height="47" fill="#b8b0a8"/><rect width="47" height="12" fill="#d9d6d0"/><ellipse cx="24" cy="6" rx="8" ry="6" fill="#5a4a40"/><path d="M16 10 Q30 6 44 14 L47 30 L20 28 z" fill="#e6e0dc"/><path d="M24 14 Q34 12 42 18 L44 28 L26 26 z" fill="#b9b4b8"/><rect x="0" y="12" width="14" height="8" fill="#d65a52"/><rect x="0" y="20" width="16" height="6" fill="#58b8b0"/><rect x="6" y="15" width="6" height="4" fill="#f4f4f4"/><path d="M0 28 L47 30 V34 L0 33 z" fill="#d4474a"/><circle cx="33" cy="27" r="3.5" fill="#f0b8b0"/><path d="M0 33 L47 34 V47 H0 z" fill="#e0b84a"/><path d="M0 34 L20 47 H0 z" fill="#7aa85a"/><path d="M28 36 L47 35 V47 H36 z" fill="#e8924a"/><path d="M0 34 L10 34 L14 39 L0 40 z" fill="#7fb4d8"/></g></g></svg><div style="position:absolute;left:345.45000000000005px;top:439.0px;width:46.6px;height:46.6px;background:#e9e9ea;border-radius:50%;"></div><svg style="position:absolute;left:355.75px;top:449.29999999999995px;" width="26" height="26" viewBox="0 0 26 26"><circle cx="13" cy="8.2" r="5.3" fill="#c9c9cb"/><path d="M10.5 12 h5 v3 q0 1.5 2 2 l5 1.6 q1.5 .6 1.5 2.4 V22 H2 V21 q0-1.8 1.5-2.4 l5-1.6 q2-.5 2-2 z" fill="#c9c9cb"/></svg><div style="position:absolute;left:39px;top:126.0px;width:16px;height:16px;background:#f58220;"></div><svg style="position:absolute;left:42px;top:129.0px;" width="10" height="10" viewBox="0 0 10 10"><circle cx="5" cy="3" r="2.3" fill="#fff"/><path d="M0.5 9.5 a4.5 4.5 0 0 1 9 0 z" fill="#fff"/></svg><div style="position:absolute;left:55px;top:126.0px;width:44.8px;height:16px;background:#1a1b1d;"></div><svg style="position:absolute;left:58.5px;top:128.8px;" width="10" height="11" viewBox="0 0 10 11"><rect x="3.2" y="0.6" width="3.6" height="6.2" rx="1.8" fill="#fff"/><path d="M1.4 5 a3.6 3.6 0 0 0 7.2 0 M5 8.6 V10.4" fill="none" stroke="#fff" stroke-width="1.1"/></svg><div style="position:absolute;left:71.00px;top:129.59px;height:10.32px;line-height:10.32px;font-size:8.6px;color:#fff;white-space:nowrap;font-family:'Liberation Sans',sans-serif"><span class="c" style="font-size:8.6px;">北极星</span></div><div style="position:absolute;left:204.10000000000002px;top:126.0px;width:44.8px;height:16px;background:#1a1b1d;"></div><svg style="position:absolute;left:207.60000000000002px;top:128.8px;" width="10" height="11" viewBox="0 0 10 11"><rect x="3.2" y="0.6" width="3.6" height="6.2" rx="1.8" fill="#fff"/><path d="M1.4 5 a3.6 3.6 0 0 0 7.2 0 M5 8.6 V10.4" fill="none" stroke="#fff" stroke-width="1"/><path d="M1.2 9 L9 1.6" stroke="#d9414e" stroke-width="1.1"/></svg><div style="position:absolute;left:220.10px;top:129.59px;height:10.32px;line-height:10.32px;font-size:8.6px;color:#fff;white-space:nowrap;font-family:'Liberation Sans',sans-serif"><span class="c" style="font-size:8.6px;">刘文娟</span></div><div style="position:absolute;left:369.20000000000005px;top:126.0px;width:44.8px;height:16px;background:#1a1b1d;"></div><svg style="position:absolute;left:372.70000000000005px;top:128.8px;" width="10" height="11" viewBox="0 0 10 11"><rect x="3.2" y="0.6" width="3.6" height="6.2" rx="1.8" fill="#fff"/><path d="M1.4 5 a3.6 3.6 0 0 0 7.2 0 M5 8.6 V10.4" fill="none" stroke="#fff" stroke-width="1"/><path d="M1.2 9 L9 1.6" stroke="#d9414e" stroke-width="1.1"/></svg><div style="position:absolute;left:385.20px;top:129.59px;height:10.32px;line-height:10.32px;font-size:8.6px;color:#fff;white-space:nowrap;font-family:'Liberation Sans',sans-serif"><span class="c" style="font-size:8.6px;">韦忠亮</span></div><div style="position:absolute;left:534.3px;top:126.0px;width:44.8px;height:16px;background:#1a1b1d;"></div><svg style="position:absolute;left:537.8px;top:128.8px;" width="10" height="11" viewBox="0 0 10 11"><rect x="3.2" y="0.6" width="3.6" height="6.2" rx="1.8" fill="#fff"/><path d="M1.4 5 a3.6 3.6 0 0 0 7.2 0 M5 8.6 V10.4" fill="none" stroke="#fff" stroke-width="1"/><path d="M1.2 9 L9 1.6" stroke="#d9414e" stroke-width="1.1"/></svg><div style="position:absolute;left:550.30px;top:129.59px;height:10.32px;line-height:10.32px;font-size:8.6px;color:#fff;white-space:nowrap;font-family:'Liberation Sans',sans-serif"><span class="c" style="font-size:8.6px;">孙克雷</span></div><div style="position:absolute;left:39px;top:219.60000000000002px;width:44.8px;height:16px;background:#1a1b1d;"></div><svg style="position:absolute;left:42.5px;top:222.40000000000003px;" width="10" height="11" viewBox="0 0 10 11"><rect x="3.2" y="0.6" width="3.6" height="6.2" rx="1.8" fill="#fff"/><path d="M1.4 5 a3.6 3.6 0 0 0 7.2 0 M5 8.6 V10.4" fill="none" stroke="#fff" stroke-width="1"/><path d="M1.2 9 L9 1.6" stroke="#d9414e" stroke-width="1.1"/></svg><div style="position:absolute;left:55.00px;top:223.19px;height:10.32px;line-height:10.32px;font-size:8.6px;color:#fff;white-space:nowrap;font-family:'Liberation Sans',sans-serif"><span class="c" style="font-size:8.6px;">杨高明</span></div><div style="position:absolute;left:204.10000000000002px;top:219.60000000000002px;width:44.8px;height:16px;background:#1a1b1d;"></div><svg style="position:absolute;left:207.60000000000002px;top:222.40000000000003px;" width="10" height="11" viewBox="0 0 10 11"><rect x="3.2" y="0.6" width="3.6" height="6.2" rx="1.8" fill="#fff"/><path d="M1.4 5 a3.6 3.6 0 0 0 7.2 0 M5 8.6 V10.4" fill="none" stroke="#fff" stroke-width="1"/><path d="M1.2 9 L9 1.6" stroke="#d9414e" stroke-width="1.1"/></svg><div style="position:absolute;left:220.10px;top:223.19px;height:10.32px;line-height:10.32px;font-size:8.6px;color:#fff;white-space:nowrap;font-family:'Liberation Sans',sans-serif"><span class="c" style="font-size:8.6px;">马瑞君</span></div><div style="position:absolute;left:369.20000000000005px;top:219.60000000000002px;width:44.8px;height:16px;background:#1a1b1d;"></div><svg style="position:absolute;left:372.70000000000005px;top:222.40000000000003px;" width="10" height="11" viewBox="0 0 10 11"><rect x="3.2" y="0.6" width="3.6" height="6.2" rx="1.8" fill="#fff"/><path d="M1.4 5 a3.6 3.6 0 0 0 7.2 0 M5 8.6 V10.4" fill="none" stroke="#fff" stroke-width="1"/><path d="M1.2 9 L9 1.6" stroke="#d9414e" stroke-width="1.1"/></svg><div style="position:absolute;left:385.20px;top:223.19px;height:10.32px;line-height:10.32px;font-size:8.6px;color:#fff;white-space:nowrap;font-family:'Liberation Sans',sans-serif"><span class="c" style="font-size:8.6px;">鲍士水</span></div><div style="position:absolute;left:534.3px;top:219.60000000000002px;width:44.8px;height:16px;background:#1a1b1d;"></div><svg style="position:absolute;left:537.8px;top:222.40000000000003px;" width="10" height="11" viewBox="0 0 10 11"><rect x="3.2" y="0.6" width="3.6" height="6.2" rx="1.8" fill="#fff"/><path d="M1.4 5 a3.6 3.6 0 0 0 7.2 0 M5 8.6 V10.4" fill="none" stroke="#fff" stroke-width="1"/><path d="M1.2 9 L9 1.6" stroke="#d9414e" stroke-width="1.1"/></svg><div style="position:absolute;left:550.30px;top:223.19px;height:10.32px;line-height:10.32px;font-size:8.6px;color:#fff;white-space:nowrap;font-family:'Liberation Sans',sans-serif"><span class="c" style="font-size:8.6px;">孙海峰</span></div><div style="position:absolute;left:39px;top:313.20000000000005px;width:44.8px;height:16px;background:#1a1b1d;"></div><svg style="position:absolute;left:42.5px;top:316.00000000000006px;" width="10" height="11" viewBox="0 0 10 11"><rect x="3.2" y="0.6" width="3.6" height="6.2" rx="1.8" fill="#fff"/><path d="M1.4 5 a3.6 3.6 0 0 0 7.2 0 M5 8.6 V10.4" fill="none" stroke="#fff" stroke-width="1"/><path d="M1.2 9 L9 1.6" stroke="#d9414e" stroke-width="1.1"/></svg><div style="position:absolute;left:55.00px;top:316.79px;height:10.32px;line-height:10.32px;font-size:8.6px;color:#fff;white-space:nowrap;font-family:'Liberation Sans',sans-serif"><span class="c" style="font-size:8.6px;">苏树智</span></div><div style="position:absolute;left:204.10000000000002px;top:313.20000000000005px;width:44.8px;height:16px;background:#1a1b1d;"></div><svg style="position:absolute;left:207.60000000000002px;top:316.00000000000006px;" width="10" height="11" viewBox="0 0 10 11"><rect x="3.2" y="0.6" width="3.6" height="6.2" rx="1.8" fill="#fff"/><path d="M1.4 5 a3.6 3.6 0 0 0 7.2 0 M5 8.6 V10.4" fill="none" stroke="#fff" stroke-width="1"/><path d="M1.2 9 L9 1.6" stroke="#d9414e" stroke-width="1.1"/></svg><div style="position:absolute;left:220.10px;top:316.79px;height:10.32px;line-height:10.32px;font-size:8.6px;color:#fff;white-space:nowrap;font-family:'Liberation Sans',sans-serif"><span class="c" style="font-size:8.6px;">张明伟</span></div><div style="position:absolute;left:369.20000000000005px;top:313.20000000000005px;width:44.8px;height:16px;background:#1a1b1d;"></div><svg style="position:absolute;left:372.70000000000005px;top:316.00000000000006px;" width="10" height="11" viewBox="0 0 10 11"><rect x="3.2" y="0.6" width="3.6" height="6.2" rx="1.8" fill="#fff"/><path d="M1.4 5 a3.6 3.6 0 0 0 7.2 0 M5 8.6 V10.4" fill="none" stroke="#fff" stroke-width="1"/><path d="M1.2 9 L9 1.6" stroke="#d9414e" stroke-width="1.1"/></svg><div style="position:absolute;left:385.20px;top:316.79px;height:10.32px;line-height:10.32px;font-size:8.6px;color:#fff;white-space:nowrap;font-family:'Liberation Sans',sans-serif"><span class="c" style="font-size:8.6px;">吴观茂</span></div><div style="position:absolute;left:534.3px;top:313.20000000000005px;width:36.2px;height:16px;background:#1a1b1d;"></div><svg style="position:absolute;left:537.8px;top:316.00000000000006px;" width="10" height="11" viewBox="0 0 10 11"><rect x="3.2" y="0.6" width="3.6" height="6.2" rx="1.8" fill="#fff"/><path d="M1.4 5 a3.6 3.6 0 0 0 7.2 0 M5 8.6 V10.4" fill="none" stroke="#fff" stroke-width="1"/><path d="M1.2 9 L9 1.6" stroke="#d9414e" stroke-width="1.1"/></svg><div style="position:absolute;left:550.30px;top:316.79px;height:10.32px;line-height:10.32px;font-size:8.6px;color:#fff;white-space:nowrap;font-family:'Liberation Sans',sans-serif"><span class="c" style="font-size:8.6px;">吴坤</span></div><div style="position:absolute;left:39px;top:406.79999999999995px;width:44.8px;height:16px;background:#1a1b1d;"></div><svg style="position:absolute;left:42.5px;top:409.5999999999999px;" width="10" height="11" viewBox="0 0 10 11"><rect x="3.2" y="0.6" width="3.6" height="6.2" rx="1.8" fill="#fff"/><path d="M1.4 5 a3.6 3.6 0 0 0 7.2 0 M5 8.6 V10.4" fill="none" stroke="#fff" stroke-width="1"/><path d="M1.2 9 L9 1.6" stroke="#d9414e" stroke-width="1.1"/></svg><div style="position:absolute;left:55.00px;top:410.39px;height:10.32px;line-height:10.32px;font-size:8.6px;color:#fff;white-space:nowrap;font-family:'Liberation Sans',sans-serif"><span class="c" style="font-size:8.6px;">石文兵</span></div><div style="position:absolute;left:204.10000000000002px;top:406.79999999999995px;width:44.8px;height:16px;background:#1a1b1d;"></div><svg style="position:absolute;left:207.60000000000002px;top:409.5999999999999px;" width="10" height="11" viewBox="0 0 10 11"><rect x="3.2" y="0.6" width="3.6" height="6.2" rx="1.8" fill="#fff"/><path d="M1.4 5 a3.6 3.6 0 0 0 7.2 0 M5 8.6 V10.4" fill="none" stroke="#fff" stroke-width="1"/><path d="M1.2 9 L9 1.6" stroke="#d9414e" stroke-width="1.1"/></svg><div style="position:absolute;left:220.10px;top:410.39px;height:10.32px;line-height:10.32px;font-size:8.6px;color:#fff;white-space:nowrap;font-family:'Liberation Sans',sans-serif"><span class="c" style="font-size:8.6px;">许家昌</span></div><div style="position:absolute;left:369.20000000000005px;top:406.79999999999995px;width:92.8px;height:16px;background:#1a1b1d;"></div><svg style="position:absolute;left:372.70000000000005px;top:409.5999999999999px;" width="10" height="11" viewBox="0 0 10 11"><rect x="3.2" y="0.6" width="3.6" height="6.2" rx="1.8" fill="#fff"/><path d="M1.4 5 a3.6 3.6 0 0 0 7.2 0 M5 8.6 V10.4" fill="none" stroke="#fff" stroke-width="1"/><path d="M1.2 9 L9 1.6" stroke="#d9414e" stroke-width="1.1"/></svg><div style="position:absolute;left:385.20px;top:410.39px;height:10.32px;line-height:10.32px;font-size:8.6px;color:#fff;white-space:nowrap;font-family:'Liberation Sans',sans-serif"><span class="c" style="font-size:8.6px;">张顺香</span><span style="font-family:'Liberation Sans';font-size:8.6px;letter-spacing:0.0px;">+</span><span class="c" style="font-size:8.6px;">计算机学院</span></div><div style="position:absolute;left:534.3px;top:406.79999999999995px;width:23.2px;height:16px;background:#1a1b1d;"></div><div style="position:absolute;left:536.80px;top:410.39px;height:10.32px;line-height:10.32px;font-size:8.6px;color:#fff;white-space:nowrap;font-family:'Liberation Sans',sans-serif"><span class="c" style="font-size:8.6px;">王琳</span></div><div style="position:absolute;left:286.70000000000005px;top:501.4px;width:44.8px;height:16px;background:#1a1b1d;"></div><svg style="position:absolute;left:290.20000000000005px;top:504.19999999999993px;" width="10" height="11" viewBox="0 0 10 11"><rect x="3.2" y="0.6" width="3.6" height="6.2" rx="1.8" fill="#fff"/><path d="M1.4 5 a3.6 3.6 0 0 0 7.2 0 M5 8.6 V10.4" fill="none" stroke="#fff" stroke-width="1"/><path d="M1.2 9 L9 1.6" stroke="#d9414e" stroke-width="1.1"/></svg><div style="position:absolute;left:302.70px;top:504.99px;height:10.32px;line-height:10.32px;font-size:8.6px;color:#fff;white-space:nowrap;font-family:'Liberation Sans',sans-serif"><span class="c" style="font-size:8.6px;">朱小东</span></div><svg style="position:absolute;left:726px;top:507px;" width="12" height="12" viewBox="0 0 12 12"><path d="M12 1.5 L1.5 12 H12 z" fill="#2a2b2d"/><path d="M12 2.5 L2.5 12 M12 5 L5 12 M12 7.5 L7.5 12 M12 10 L10 12" stroke="#b9b9b9" stroke-width="0.9"/></svg></div><svg style="position:absolute;left:501px;top:638px;" width="11" height="11" viewBox="0 0 11 11"><path d="M0 2.5 L8.5 11 M0 5 L6 11 M0 7.5 L3.5 11" stroke="#3a3a3a" stroke-width="0.8"/></svg><div style="position:absolute;left:0px;top:672.3px;width:1267px;height:14px;background:#f3f3f3;border-top:1px solid #dcdcdc;box-sizing:border-box;"></div><div style="position:absolute;left:6.30px;top:675.06px;height:9.48px;line-height:9.48px;font-size:7.9px;color:#4a4a4a;white-space:nowrap;font-family:'Liberation Sans',sans-serif"><span class="c" style="font-size:7.9px;">第</span><span style="font-family:'Liberation Sans';font-size:7.9px;letter-spacing:0.22247395833333408px;">&nbsp;1&nbsp;</span><span class="c" style="font-size:7.9px;">页，共</span><span style="font-family:'Liberation Sans';font-size:7.9px;letter-spacing:0.22247395833333408px;">&nbsp;2&nbsp;</span><span class="c" style="font-size:7.9px;">页</span></div><div style="position:absolute;left:77.30px;top:675.06px;height:9.48px;line-height:9.48px;font-size:7.9px;color:#4a4a4a;white-space:nowrap;font-family:'Liberation Sans',sans-serif"><span style="font-family:'Liberation Sans';font-size:7.9px;letter-spacing:0.3814648437500008px;">673&nbsp;</span><span class="c" style="font-size:7.9px;">个字</span></div><svg style="position:absolute;left:123px;top:674.5px;" width="10" height="9" viewBox="0 0 10 9"><path d="M0.5 1 Q2.5 0.2 4.5 1.3 V8 Q2.5 7 0.5 7.8 z M4.5 1.3 Q6.5 0.2 8.5 1 V4" fill="none" stroke="#6a6a6a" stroke-width="0.8"/><path d="M6 5.5 l1.2 1.5 l2-3" fill="none" stroke="#6a6a6a" stroke-width="0.9"/></svg><div style="position:absolute;left:143.60px;top:675.06px;height:9.48px;line-height:9.48px;font-size:7.9px;color:#4a4a4a;white-space:nowrap;font-family:'Liberation Sans',sans-serif"><span class="c" style="font-size:7.9px;">中文</span><span style="font-family:'Liberation Sans';font-size:7.9px;letter-spacing:0.06954687500000034px;">(</span><span class="c" style="font-size:7.9px;">中国</span><span style="font-family:'Liberation Sans';font-size:7.9px;letter-spacing:0.06954687500000034px;">)</span></div><svg style="position:absolute;left:193px;top:674.3px;" width="11" height="10" viewBox="0 0 11 10"><circle cx="4.5" cy="5" r="3.8" fill="none" stroke="#555" stroke-width="0.9" stroke-dasharray="18 6"/><path d="M7 6 l1.3 1.6 l2.2-3.2" fill="none" stroke="#555" stroke-width="0.9"/></svg><div style="position:absolute;left:204.60px;top:675.06px;height:9.48px;line-height:9.48px;font-size:7.9px;color:#4a4a4a;white-space:nowrap;font-family:'Liberation Sans',sans-serif"><span class="c" style="font-size:7.9px;">辅助功能</span><span style="font-family:'Liberation Sans';font-size:7.9px;letter-spacing:-0.3447187499999984px;">:&nbsp;</span><span class="c" style="font-size:7.9px;">不可用</span></div><svg style="position:absolute;left:1075px;top:675px;" width="10" height="9" viewBox="0 0 10 9"><path d="M0.5 0.5 H4.3 V8 H0.5 z M5.7 0.5 H9.5 V8 H5.7 z" fill="none" stroke="#777" stroke-width="0.9"/><path d="M1.5 2.5 h2 M1.5 4.5 h2 M6.7 2.5 h2 M6.7 4.5 h2" stroke="#999" stroke-width="0.7"/></svg><div style="position:absolute;left:1092.8px;top:672.8px;width:25.8px;height:13.4px;background:#c6c6c6;"></div><svg style="position:absolute;left:1101px;top:675px;" width="10" height="9" viewBox="0 0 10 9"><rect x="0.5" y="0.5" width="9" height="8" fill="none" stroke="#777" stroke-width="0.9"/><path d="M2 2.5 h6 M2 4.3 h6 M2 6.1 h6" stroke="#888" stroke-width="0.8"/></svg><svg style="position:absolute;left:1127.5px;top:675px;" width="11" height="9" viewBox="0 0 11 9"><rect x="0.5" y="0.5" width="8" height="6.5" fill="none" stroke="#777" stroke-width="0.9"/><path d="M0.5 2.3 h8" stroke="#777" stroke-width="0.8"/><circle cx="8" cy="6.5" r="2.2" fill="#f3f3f3" stroke="#666" stroke-width="0.8"/></svg><div style="position:absolute;left:1149.5px;top:679px;width:5px;height:1px;background:#666;"></div><div style="position:absolute;left:1158px;top:679px;width:66px;height:1px;background:#7a7a7a;"></div><div style="position:absolute;left:1191.3px;top:676.5px;width:1px;height:6px;background:#666;"></div><div style="position:absolute;left:1194px;top:675px;width:2.6px;height:9px;background:#4a4a4a;"></div><div style="position:absolute;left:1227px;top:679px;width:6px;height:1px;background:#666;"></div><div style="position:absolute;left:1229.5px;top:676.5px;width:1px;height:6px;background:#666;"></div><div style="position:absolute;left:1241.50px;top:674.90px;height:9.84px;line-height:9.84px;font-size:8.2px;color:#3a3a3a;white-space:nowrap;font-family:'Liberation Sans',sans-serif"><span style="font-family:'Liberation Sans';font-size:8.2px;letter-spacing:-0.11787499999999884px;">150%</span></div><div style="position:absolute;left:8px;top:600.7px;width:93px;height:19px;background:#5b5b5b;border-radius:3px;opacity:0.96;"></div><svg style="position:absolute;left:14px;top:604.5px;" width="11.5" height="11.5" viewBox="0 0 11.5 11.5"><circle cx="5.75" cy="5.75" r="5.5" fill="#fff"/><circle cx="3.8" cy="4.5" r="0.8" fill="#5b5b5b"/><circle cx="7.7" cy="4.5" r="0.8" fill="#5b5b5b"/><path d="M2.8 6.5 a3 3 0 0 0 5.9 0 z" fill="#5b5b5b"/></svg><div style="position:absolute;left:29.5px;top:604px;width:1px;height:12px;background:#747474;"></div><div style="position:absolute;left:38.50px;top:606.06px;height:9.48px;line-height:9.48px;font-size:7.9px;color:#c4c4c4;white-space:nowrap;font-family:'Liberation Sans',sans-serif"><span class="c" style="font-size:7.9px;">说点什么</span><span style="font-family:'Liberation Sans';font-size:7.9px;letter-spacing:-0.3947187500000003px;">...</span></div><div style="position:absolute;left:82px;top:604px;width:1px;height:12px;background:#747474;"></div><svg style="position:absolute;left:88px;top:606.5px;" width="6" height="8" viewBox="0 0 6 8"><path d="M4.8 0.8 L1.3 4 L4.8 7.2" fill="none" stroke="#f0f0f0" stroke-width="1.4"/></svg><div style="position:absolute;left:0px;top:686.3px;width:1267px;height:13px;background:#1b2433;"></div><svg style="position:absolute;left:10px;top:693px;" width="12" height="9" viewBox="0 0 12 9"><path d="M0 2.2 L5.3 1.5 V9 H0 z M6.2 1.4 L12 0.6 V9 H6.2 z" fill="#fff"/></svg><svg style="position:absolute;left:45px;top:692.5px;" width="12" height="8" viewBox="0 0 12 8"><circle cx="6" cy="6.5" r="4.6" fill="none" stroke="#fff" stroke-width="1.2"/></svg><svg style="position:absolute;left:72px;top:693.5px;" width="13" height="7" viewBox="0 0 13 7"><path d="M1 1 h2 M4.5 1 h6 M12 1 v1" stroke="#fff" stroke-width="1.2"/><rect x="2.5" y="4" width="7" height="4" fill="none" stroke="#fff" stroke-width="1.1"/><path d="M11.5 4 V7" stroke="#fff" stroke-width="1.2"/></svg><svg style="position:absolute;left:103px;top:691.3px;" width="18" height="9" viewBox="0 0 18 9"><circle cx="9" cy="9" r="8" fill="#1f9fe0"/><path d="M3 9 a6 6 0 0 1 12 0 z" fill="#3fd08a"/><path d="M5 9 a4.5 4.5 0 0 1 9 0 z" fill="#1773c8"/></svg><div style="position:absolute;left:138px;top:691.2px;width:16px;height:9.5px;background:#f5d41e;"></div><svg style="position:absolute;left:138px;top:691.2px;" width="16" height="9.5" viewBox="0 0 16 9.5"><path d="M8 9.5 L12 4" stroke="#fff" stroke-width="1.5"/></svg><svg style="position:absolute;left:169px;top:691.6px;" width="18" height="8" viewBox="0 0 18 8"><ellipse cx="7" cy="7" rx="6.5" ry="5.5" fill="#2dc84d"/><ellipse cx="13" cy="9" rx="4.5" ry="3.8" fill="#2dc84d" stroke="#1b2433" stroke-width="0.8"/></svg><div style="position:absolute;left:195.5px;top:686.3px;width:30px;height:13px;background:#3b4657;"></div><svg style="position:absolute;left:202px;top:693.5px;" width="16" height="7" viewBox="0 0 16 7"><rect x="0" y="0" width="16" height="9" rx="3" fill="#1a6df0"/><circle cx="5.5" cy="5" r="1.6" fill="#fff"/><circle cx="10.5" cy="5" r="1.6" fill="#fff"/></svg><svg style="position:absolute;left:236px;top:694px;" width="17" height="8" viewBox="0 0 17 8"><path d="M0 1.5 Q0 0 1.5 0 H6 L8 2 H15.5 Q17 2 17 3.5 V8 H0 z" fill="#f2c241"/><path d="M0 4 H17 V8 H0 z" fill="#f7d463"/></svg><svg style="position:absolute;left:268px;top:691.5px;" width="16" height="9" viewBox="0 0 16 9"><circle cx="8" cy="8.5" r="7.5" fill="#8a2fa0"/><path d="M11 5 Q6 3 5 7 Q5 10 9 9.5" fill="none" stroke="#fff" stroke-width="1.8"/></svg><svg style="position:absolute;left:300px;top:692.2px;" width="17" height="8.5" viewBox="0 0 17 8.5"><rect x="4" y="0.5" width="13" height="9" fill="#2b7cd3"/><rect x="0" y="2.5" width="9" height="7" fill="#185abd"/><path d="M2 4.5 l1 4 l1.5-3 l1.5 3 l1-4" fill="none" stroke="#fff" stroke-width="0.9"/></svg><svg style="position:absolute;left:991px;top:690.5px;" width="13" height="11" viewBox="0 0 13 11"><circle cx="5" cy="9" r="4.5" fill="#f28a1e"/><circle cx="10" cy="9" r="4" fill="#d8dde6"/><circle cx="7" cy="5" r="3" fill="#f7a73a"/></svg><div style="position:absolute;left:1010.00px;top:695.20px;height:9.84px;line-height:9.84px;font-size:8.2px;color:#f0f0f0;white-space:nowrap;font-family:'Liberation Sans',sans-serif"><span style="font-family:'Liberation Sans';font-size:8.2px;letter-spacing:1.390328125px;">1°C&nbsp;</span><span class="c" style="font-size:8.2px;">多云</span></div><svg style="position:absolute;left:1060px;top:696px;" width="7" height="5" viewBox="0 0 7 5"><path d="M0.8 4 L3.5 1 L6.2 4" fill="none" stroke="#fff" stroke-width="1"/></svg><div style="position:absolute;left:1077.5px;top:694.5px;width:9px;height:9px;background:#2dc84d;border-radius:50%;"></div><svg style="position:absolute;left:1094px;top:695px;" width="10" height="7" viewBox="0 0 10 7"><path d="M0.5 4 h2 l3-3 v6" fill="none" stroke="#fff" stroke-width="1"/><path d="M7 2.5 q2 2 0 4.5" fill="none" stroke="#fff" stroke-width="0.9"/></svg><svg style="position:absolute;left:1110px;top:693.5px;" width="8" height="9" viewBox="0 0 8 9"><path d="M4 0 L6 5 L5 9 H3 L2 5 z" fill="#e8a23a"/></svg><svg style="position:absolute;left:1128px;top:693.5px;" width="9" height="8" viewBox="0 0 9 8"><path d="M1 8 Q2 2 6 1 Q8 3 5 6 z" fill="none" stroke="#fff" stroke-width="1.1"/></svg><svg style="position:absolute;left:1145px;top:694.5px;" width="16" height="7" viewBox="0 0 16 7"><rect x="0.6" y="0.6" width="14.8" height="8" fill="none" stroke="#fff" stroke-width="1"/><path d="M3 3.5 h10" stroke="#fff" stroke-width="0.9" stroke-dasharray="1.2 1"/></svg><svg style="position:absolute;left:1169px;top:695.5px;" width="11" height="6" viewBox="0 0 11 6"><rect x="0.6" y="0.6" width="9.8" height="7" fill="none" stroke="#fff" stroke-width="1"/></svg><div style="position:absolute;left:1200.00px;top:689.02px;height:9.36px;line-height:9.36px;font-size:7.8px;color:#fff;white-space:nowrap;font-family:'Liberation Sans',sans-serif"><span style="font-family:'Liberation Sans';font-size:7.8px;letter-spacing:0.45511718749999996px;">9:47</span></div><svg style="position:absolute;left:1240px;top:695px;" width="9" height="7" viewBox="0 0 9 7"><path d="M0.6 0.6 H8.4 V7 H0.6 z M2 3 h5 M2 5 h5" fill="none" stroke="#fff" stroke-width="1"/></svg><div style="position:absolute;left:0px;top:632px;width:4.5px;height:67px;background:#1dc77a;"></div><div style="position:absolute;left:1263.5px;top:634px;width:3.5px;height:65px;background:#1dc77a;"></div></body></html>
